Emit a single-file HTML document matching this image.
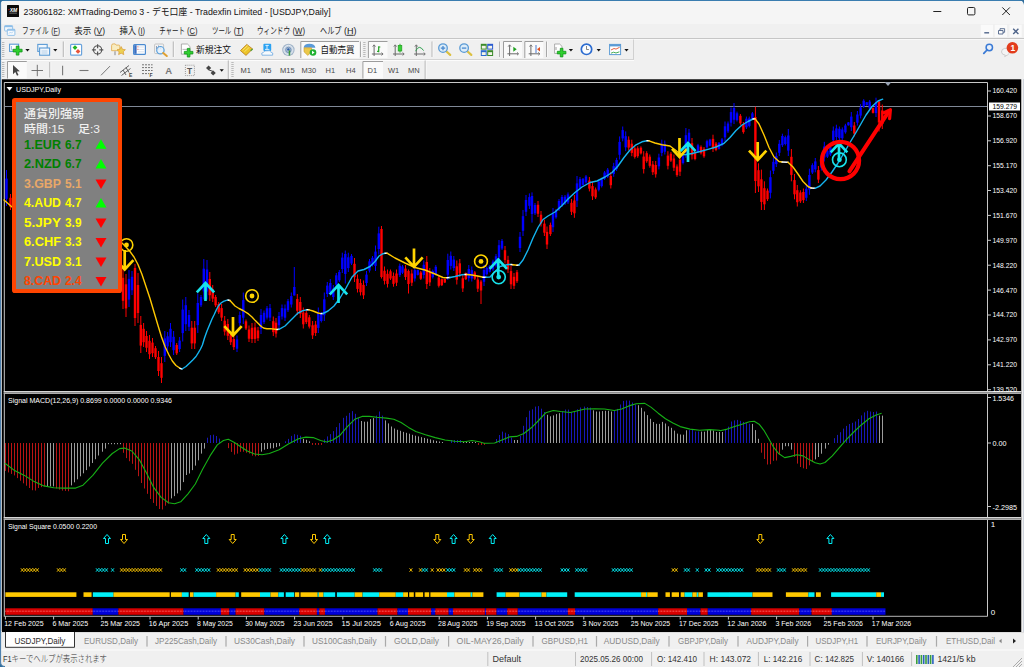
<!DOCTYPE html><html lang="ja"><head><meta charset="utf-8"><title>USDJPY,Daily</title><style>

html,body{margin:0;padding:0;}
body{width:1024px;height:667px;overflow:hidden;background:#f0f0f0;font-family:"Liberation Sans","Noto Sans CJK JP",sans-serif;position:relative;}
.t{position:absolute;white-space:nowrap;}
.a{position:absolute;}
svg{position:absolute;left:0;top:0;}
svg text{font-family:"Liberation Sans","Noto Sans CJK JP",sans-serif;}

</style></head><body>
<div class="a" style="left:0;top:0;width:1024px;height:24px;background:#f5f5f5"></div>
<div class="a" style="left:0;top:24px;width:1024px;height:14px;background:#f0f0f0"></div>
<div class="a" style="left:0;top:0;width:1024px;height:1px;background:#3a7db0"></div>
<div class="a" style="left:6.9px;top:5.1px;width:12px;height:12px;background:#0a0a0a;border-radius:0.6px"></div>
<div class="a" style="left:0;top:37.7px;width:1024px;height:1.2px;background:#c6c6c6"></div>
<div class="a" style="left:0;top:38.9px;width:1024px;height:1px;background:#f9f9f9"></div>
<div class="a" style="left:0;top:59px;width:634px;height:1px;background:#d4d4d4"></div>
<div class="a" style="left:0;top:60px;width:634px;height:1px;background:#fcfcfc"></div>
<svg width="1024" height="667" viewBox="0 0 1024 667">
<path d="M933.3,11.5 h8" stroke="#222" stroke-width="1" fill="none"/>
<rect x="967.5" y="7.5" width="7.4" height="7.4" rx="1.2" fill="none" stroke="#222" stroke-width="1"/>
<path d="M1002.3,7.4 l7.6,7.6 M1009.9,7.4 l-7.6,7.6" stroke="#222" stroke-width="1" fill="none"/>
<rect x="980.8" y="24.8" width="12.2" height="12.2" fill="#fafafa"/>
<rect x="994.8" y="24.8" width="12.2" height="12.2" fill="#fafafa"/>
<rect x="1009.5" y="24.8" width="12.2" height="12.2" fill="#fafafa"/>
<path d="M984.3,32.8 h4.8" stroke="#50658a" stroke-width="1.4" fill="none"/>
<path d="M998.5,30.5 h4.5 v3.5 h-4.5 z M1000,30.5 v-1.8 h4.6 v3.6 h-1.6" stroke="#50658a" stroke-width="0.9" fill="none"/>
<path d="M1013.2,28.8 l5.2,5.2 M1018.4,28.8 l-5.2,5.2" stroke="#50658a" stroke-width="1.4" fill="none"/>
<rect x="4.6" y="25.6" width="8" height="5.4" rx="0.8" fill="#f4f9fd" stroke="#8cbde8" stroke-width="0.9"/><rect x="4.6" y="25.6" width="8" height="1.6" fill="#8cbde8"/><rect x="7.3" y="29.2" width="7.6" height="6.2" rx="0.8" fill="#f8fbfe" stroke="#8cbde8" stroke-width="0.9"/><rect x="7.3" y="29.2" width="7.6" height="1.5" fill="#8cbde8"/><path d="M9,33.6 l1.4,-1.6 l1.2,1.2 l1.6,-1.8" stroke="#9cc4ea" stroke-width="0.7" fill="none"/>
<rect x="9.3" y="12.7" width="7.6" height="0.8" fill="#8a8a8a"/><circle cx="9" cy="9.7" r="0.6" fill="#e02020"/>
<circle cx="989.3" cy="47.5" r="3.2" fill="#e8f0fb" stroke="#3a7ad5" stroke-width="1.5"/><path d="M987,50 l-3.2,3.4" stroke="#3a7ad5" stroke-width="1.8" stroke-linecap="round"/>
<path d="M1001.5,52 a4,3.6 0 1 1 6,3 l-2.8,1.6 l0.6,-1.5 a4,3.6 0 0 1 -3.8,-3.1z" fill="#f4f4f4" stroke="#bdbdbd" stroke-width="0.7"/>
<circle cx="1012.4" cy="47.8" r="5.8" fill="#e23c1c"/>
<text x="1010.4" y="51" font-size="8.5" font-weight="bold" fill="#fff">1</text>
<path d="M2,42.5 h2.4 M2,44.5 h2.4 M2,46.5 h2.4 M2,48.5 h2.4 M2,50.5 h2.4 M2,52.5 h2.4 M2,54.5 h2.4 M2,56.5 h2.4 " stroke="#b4b4b4" stroke-width="0.9"/>
<path d="M2,62.5 h2.4 M2,64.5 h2.4 M2,66.5 h2.4 M2,68.5 h2.4 M2,70.5 h2.4 M2,72.5 h2.4 M2,74.5 h2.4 M2,76.5 h2.4 " stroke="#b4b4b4" stroke-width="0.9"/>
<path d="M363.2,42.5 h2.4 M363.2,44.5 h2.4 M363.2,46.5 h2.4 M363.2,48.5 h2.4 M363.2,50.5 h2.4 M363.2,52.5 h2.4 M363.2,54.5 h2.4 M363.2,56.5 h2.4 " stroke="#b4b4b4" stroke-width="0.9"/>
<path d="M231.3,62.5 h2.4 M231.3,64.5 h2.4 M231.3,66.5 h2.4 M231.3,68.5 h2.4 M231.3,70.5 h2.4 M231.3,72.5 h2.4 M231.3,74.5 h2.4 M231.3,76.5 h2.4 " stroke="#b4b4b4" stroke-width="0.9"/>
<rect x="62.8" y="41.5" width="1" height="15.5" fill="#a8a8a8"/><rect x="63.8" y="41.5" width="0.8" height="15.5" fill="#fbfbfb"/>
<rect x="172.8" y="41.5" width="1" height="15.5" fill="#a8a8a8"/><rect x="173.8" y="41.5" width="0.8" height="15.5" fill="#fbfbfb"/>
<rect x="360.0" y="41.5" width="1" height="15.5" fill="#a8a8a8"/><rect x="361.0" y="41.5" width="0.8" height="15.5" fill="#fbfbfb"/>
<rect x="431.6" y="41.5" width="1" height="15.5" fill="#a8a8a8"/><rect x="432.6" y="41.5" width="0.8" height="15.5" fill="#fbfbfb"/>
<rect x="499.2" y="41.5" width="1" height="15.5" fill="#a8a8a8"/><rect x="500.2" y="41.5" width="0.8" height="15.5" fill="#fbfbfb"/>
<rect x="546.0" y="41.5" width="1" height="15.5" fill="#a8a8a8"/><rect x="547.0" y="41.5" width="0.8" height="15.5" fill="#fbfbfb"/>
<rect x="49.4" y="62" width="1" height="15.5" fill="#a8a8a8"/><rect x="50.4" y="62" width="0.8" height="15.5" fill="#fbfbfb"/>
<rect x="227.8" y="60.5" width="1" height="18.5" fill="#a8a8a8"/><rect x="228.8" y="60.5" width="0.8" height="18.5" fill="#fbfbfb"/>
<rect x="424.7" y="60.5" width="1" height="18.5" fill="#a8a8a8"/><rect x="425.7" y="60.5" width="0.8" height="18.5" fill="#fbfbfb"/>
<path d="M633.5,59.5 V39.5" stroke="#d0d0d0" stroke-width="1" fill="none"/>
<path d="M25.4,49 h4.2 l-2.1,2.4 z" fill="#111"/>
<path d="M53.2,49 h4.2 l-2.1,2.4 z" fill="#111"/>
<path d="M568.8,49 h4.2 l-2.1,2.4 z" fill="#111"/>
<path d="M596.6,49 h4.2 l-2.1,2.4 z" fill="#111"/>
<path d="M624.4,49 h4.2 l-2.1,2.4 z" fill="#111"/>
<path d="M219.6,69.3 h4.2 l-2.1,2.4 z" fill="#111"/>
<rect x="7" y="61" width="19.8" height="17.5" fill="#fafafa"/><path d="M7.5,78.5 V61.5 H26.8" stroke="#9c9c9c" stroke-width="1" fill="none"/>
<rect x="362.4" y="61" width="20.600000000000023" height="17.5" fill="#fafafa"/><path d="M362.9,78.5 V61.5 H383" stroke="#9c9c9c" stroke-width="1" fill="none"/>
<rect x="300.3" y="41" width="58.69999999999999" height="17" fill="#fafafa"/><path d="M300.8,58 V41.5 H359" stroke="#9c9c9c" stroke-width="1" fill="none"/>
<rect x="367.9" y="41" width="19.600000000000023" height="17" fill="#fafafa"/><path d="M368.4,58 V41.5 H387.5" stroke="#9c9c9c" stroke-width="1" fill="none"/>
<rect x="503" y="41" width="19" height="17" fill="#fafafa"/><path d="M503.5,58 V41.5 H522" stroke="#9c9c9c" stroke-width="1" fill="none"/>
<rect x="524.3" y="41" width="19.0" height="17" fill="#fafafa"/><path d="M524.8,58 V41.5 H543.3" stroke="#9c9c9c" stroke-width="1" fill="none"/>
<rect x="9.6" y="44.2" width="9" height="7.2" fill="#fff" stroke="#5b9bd5" stroke-width="1.1"/><path d="M11.5,46 v3.8 h4" stroke="#7aa7d8" stroke-width="0.7" fill="none"/>
<path d="M16.25,46.1 h2.7 v3.15 h3.15 v2.7 h-3.15 v3.15 h-2.7 v-3.15 h-3.15 v-2.7 h3.15 z" fill="#2fd02f" stroke="#12961a" stroke-width="0.8"/>
<rect x="37.8" y="44.4" width="9.4" height="7" fill="#f2f7fc" stroke="#5b9bd5" stroke-width="1.1"/><rect x="39.6" y="48" width="10" height="7.2" fill="#f2f7fc" stroke="#5b9bd5" stroke-width="1.1"/><path d="M41.5,51 h6 M41.5,53 h6" stroke="#9abbe0" stroke-width="0.7"/>
<rect x="70.6" y="44.4" width="11" height="10.8" rx="1" fill="#fff" stroke="#6aa3dc" stroke-width="1.2"/>
<path d="M72.6,47.6 l2.4,-2.4 l2.4,2.4 l-2.4,2.4 z" fill="#22b422"/><path d="M75.6,51.4 l2.4,-2.4 l2.4,2.4 l-2.4,2.4 z" fill="#e8553a"/>
<circle cx="97.6" cy="49.9" r="4.1" fill="none" stroke="#555" stroke-width="1.1"/><path d="M97.6,44.2 v4 M97.6,51.6 v4 M91.9,49.9 h4 M99.3,49.9 h4" stroke="#555" stroke-width="1.2"/>
<path d="M111.6,45.5 q0,-1.6 1.6,-1.6 h2 l1,1.2 h2.6 q1,0 1,1 v4.6 h-8.2 z" fill="#f8ecc0" stroke="#e0a848" stroke-width="0.8"/>
<rect x="114.2" y="51.2" width="1.6" height="4" fill="#b0b0b0"/>
<path d="M121.2,46.6 l1.3,2.7 l2.9,0.4 l-2.1,2 l0.5,2.9 l-2.6,-1.4 l-2.6,1.4 l0.5,-2.9 l-2.1,-2 l2.9,-0.4 z" fill="#ecd052" stroke="#d89a38" stroke-width="0.7"/>
<rect x="133.6" y="44.6" width="11.8" height="9.8" rx="1" fill="#fff" stroke="#4a8ad0" stroke-width="1.2"/><rect x="134.2" y="45.2" width="2.4" height="8.6" fill="#3a6ec0"/><path d="M138,47 h6 M138,49.4 h6 M138,51.8 h6" stroke="#c8d4e4" stroke-width="0.7"/><rect x="137.4" y="46.4" width="0.9" height="0.9" fill="#e04030"/><rect x="137.4" y="48.8" width="0.9" height="0.9" fill="#e04030"/>
<rect x="154.6" y="44" width="9" height="9.6" rx="1" fill="#f4f4f4" stroke="#b8b8b8" stroke-width="0.8"/><path d="M156.5,46 v3 M158.5,45.5 v4 M160.5,46 v3" stroke="#7a8aa8" stroke-width="0.8"/>
<circle cx="160.4" cy="50.2" r="3.7" fill="#e4f0fa" fill-opacity="0.85" stroke="#5aa0dc" stroke-width="1.2"/><path d="M163.2,53 l3.6,3" stroke="#e0a030" stroke-width="2" stroke-linecap="round"/>
<path d="M181.4,44 h6 l2.6,2.6 v7.6 h-8.6 z" fill="#fff" stroke="#9a9a9a" stroke-width="0.8"/><path d="M182.5,49.4 h6.4" stroke="#aaa" stroke-width="0.8"/>
<path d="M187.29999999999998,48.400000000000006 h2.6 v3.0 h3.0 v2.6 h-3.0 v3.0 h-2.6 v-3.0 h-3.0 v-2.6 h3.0 z" fill="#2fd02f" stroke="#12961a" stroke-width="0.8"/>
<path d="M240.4,50.6 l6.4,-6.2 l5.8,4.6 l-6.6,6.4 z" fill="#ecc428" stroke="#b87a20" stroke-width="0.8"/><path d="M242.6,50.2 l5,-4.6 M244.4,51.8 l5,-4.6" stroke="#f8e47a" stroke-width="0.9"/><path d="M250.6,50.8 l2,-1.8" stroke="#5aa040" stroke-width="1.4"/>
<rect x="263.4" y="43.8" width="7.8" height="7.2" rx="1" fill="#2aa2f2"/><path d="M265.4,45.4 h3.4 M267,45.4 v4 M265,49.4 h4.4" stroke="#fff" stroke-width="0.8" fill="none"/>
<path d="M262,55.2 q-1.4,-2.4 1.6,-3 q1,-2 3.6,-1.4 q2.6,-0.8 3.6,1.2 q3,0.6 1.8,3.2 z" fill="#f6fafd" stroke="#6aa6e0" stroke-width="0.8"/>
<circle cx="288.4" cy="49.9" r="6.2" fill="#a4b6ca"/><circle cx="288.4" cy="49.9" r="4.6" fill="#c8d4e2" stroke="#e6edf4" stroke-width="0.9"/><circle cx="288.4" cy="49.9" r="2.7" fill="#aebfd4" stroke="#6f90b8" stroke-width="0.9"/><circle cx="288.4" cy="49.4" r="1.2" fill="#2f60a8"/><rect x="288.7" y="50.4" width="1.5" height="5.2" fill="#3a9a3a"/>
<path d="M303.6,47.8 q0.4,-4 5.8,-4 q5.4,0 6,4 z" fill="#5a9ad8"/><path d="M304,47.8 h7.6 v4 l-3.8,3.6 l-3.8,-3.6 z" fill="#ecc84a" stroke="#c89a30" stroke-width="0.6"/><circle cx="313" cy="52.5" r="3.3" fill="#20b030"/><path d="M312,50.8 l2.6,1.7 l-2.6,1.7 z" fill="#fff"/>
<path d="M374.1,45.2 V56 M371.90000000000003,54 H382.70000000000005" stroke="#6a6a6a" stroke-width="1" fill="none"/><path d="M372.70000000000005,46.6 L374.1,44.8 L375.5,46.6 M381.5,52.6 L383.1,54 L381.5,55.4" stroke="#6a6a6a" stroke-width="0.9" fill="none"/>
<path d="M378.7,46.3 V52.2 M378.7,47 h1.6 M378.7,51.4 h-1.6" stroke="#20a020" stroke-width="1.2" fill="none"/>
<path d="M395.2,45.2 V56 M393.0,54 H403.8" stroke="#6a6a6a" stroke-width="1" fill="none"/><path d="M393.8,46.6 L395.2,44.8 L396.59999999999997,46.6 M402.59999999999997,52.6 L404.2,54 L402.59999999999997,55.4" stroke="#6a6a6a" stroke-width="0.9" fill="none"/>
<path d="M400,43.8 V52.6" stroke="#20a020" stroke-width="0.9"/><rect x="398.2" y="45.4" width="3.6" height="5.6" fill="#38d038" stroke="#20a020" stroke-width="0.7"/>
<path d="M416.3,45.2 V56 M414.1,54 H424.90000000000003" stroke="#6a6a6a" stroke-width="1" fill="none"/><path d="M414.90000000000003,46.6 L416.3,44.8 L417.7,46.6 M423.7,52.6 L425.3,54 L423.7,55.4" stroke="#6a6a6a" stroke-width="0.9" fill="none"/>
<path d="M415.6,51.2 q3.4,-7.4 8,-0.6" stroke="#30a050" stroke-width="1" fill="none"/>
<path d="M446.2,51.300000000000004 l4,3.6" stroke="#dcc040" stroke-width="2.2" stroke-linecap="round"/><circle cx="443" cy="48.1" r="4.3" fill="#dcecf8" stroke="#5a9ad5" stroke-width="1.3"/>
<path d="M440.8,48.1 h4.4" stroke="#4a8ad0" stroke-width="1.3"/>
<path d="M443,45.9 v4.4" stroke="#4a8ad0" stroke-width="1.3"/>
<path d="M467.3,51.300000000000004 l4,3.6" stroke="#dcc040" stroke-width="2.2" stroke-linecap="round"/><circle cx="464.1" cy="48.1" r="4.3" fill="#dcecf8" stroke="#5a9ad5" stroke-width="1.3"/>
<path d="M461.90000000000003,48.1 h4.4" stroke="#4a8ad0" stroke-width="1.3"/>
<rect x="480.8" y="43.8" width="5.9" height="5.8" fill="#3a8a2a"/><rect x="481.8" y="45.8" width="3.9" height="2.8" fill="#f4f4e8"/>
<rect x="487.2" y="43.8" width="5.9" height="5.8" fill="#2a5ad0"/><rect x="488.2" y="45.8" width="3.9" height="2.8" fill="#f4f4e8"/>
<rect x="480.8" y="50.2" width="5.9" height="5.8" fill="#2a6ad0"/><rect x="481.8" y="52.2" width="3.9" height="2.8" fill="#f4f4e8"/>
<rect x="487.2" y="50.2" width="5.9" height="5.8" fill="#3a8a2a"/><rect x="488.2" y="52.2" width="3.9" height="2.8" fill="#f4f4e8"/>
<path d="M509.6,45.2 V56 M507.40000000000003,53.8 H518.2" stroke="#6a6a6a" stroke-width="1" fill="none"/><path d="M508.20000000000005,46.6 L509.6,44.8 L511.0,46.6 M517.0,52.4 L518.6,53.8 L517.0,55.199999999999996" stroke="#6a6a6a" stroke-width="0.9" fill="none"/>
<path d="M513.3,46.8 l3.4,2.5 l-3.4,2.5 z" fill="#20a020"/>
<path d="M530.9,45.2 V56 M528.6999999999999,53.8 H539.5" stroke="#6a6a6a" stroke-width="1" fill="none"/><path d="M529.5,46.6 L530.9,44.8 L532.3,46.6 M538.3,52.4 L539.9,53.8 L538.3,55.199999999999996" stroke="#6a6a6a" stroke-width="0.9" fill="none"/>
<path d="M536,45 V53" stroke="#4a7ad0" stroke-width="1"/><path d="M540,47 l-3,2.2 l3,2.2 z" fill="#e05020"/>
<path d="M554.6,44 h5 l2.4,2.4 v7 h-7.4 z" fill="#fff" stroke="#9a9a9a" stroke-width="0.8"/><path d="M556,47 v3" stroke="#888" stroke-width="0.8"/>
<path d="M560.3000000000001,48.300000000000004 h2.6 v3.0 h3.0 v2.6 h-3.0 v3.0 h-2.6 v-3.0 h-3.0 v-2.6 h3.0 z" fill="#2fd02f" stroke="#12961a" stroke-width="0.8"/>
<circle cx="586.5" cy="49.3" r="5.2" fill="#fbfdff" stroke="#2c6cd0" stroke-width="1.7"/><path d="M586.5,46 v3.5 h2.4" stroke="#666" stroke-width="0.8" fill="none"/>
<rect x="609.6" y="44.4" width="11" height="10.2" fill="#fff" stroke="#5b9bd5" stroke-width="1"/><rect x="609.6" y="44.4" width="11" height="2" fill="#5b9bd5"/><path d="M611,50 l3,-1.5 l2,0.6 l3.6,-1.8" stroke="#e05030" stroke-width="0.9" fill="none"/><path d="M611,53.2 l2.6,-1 l2.4,0.8 l3.4,-1.2" stroke="#30a040" stroke-width="0.9" fill="none"/>
<path d="M13,65 v9.2 l2.3,-2.1 l1.7,3.6 l1.5,-0.7 l-1.7,-3.5 l3,-0.2 z" fill="#444"/>
<path d="M37.3,64.8 v11.4 M31.5,70.5 h11.5" stroke="#666" stroke-width="0.9"/>
<path d="M62.6,65.7 v9.6" stroke="#777" stroke-width="1.1"/>
<path d="M79.5,70.5 h9" stroke="#777" stroke-width="1.1"/>
<path d="M101,75.3 L110,66.1" stroke="#777" stroke-width="1"/>
<path d="M120,72.5 l9,-7 M121.5,75.5 l9,-7 M123,70 l3,5 M126,67.5 l3,5" stroke="#555" stroke-width="0.9" fill="none"/>
<text x="129" y="77" font-size="5" font-weight="bold" fill="#444">E</text>
<path d="M142,64.8 h10.6 M142,67.6 h10.6 M142,70.5 h10.6 M142,73.6 h7" stroke="#666" stroke-width="0.9" stroke-dasharray="2 1"/>
<text x="149.6" y="77" font-size="5" font-weight="bold" fill="#444">F</text>
<text x="165.2" y="74" font-size="9.5" font-weight="bold" fill="#777">A</text>
<rect x="185.4" y="65.2" width="9" height="10.4" fill="none" stroke="#888" stroke-width="0.8" stroke-dasharray="1 1"/><text x="187" y="74" font-size="8.5" font-weight="bold" fill="#555">T</text>
<path d="M206,68 l2.6,-2.4 l2.6,2.4 l-2.6,2.4 z M210.6,73 l2.6,-2.4 l2.6,2.4 l-2.6,2.4 z" fill="#444"/><path d="M209,70 l4,1.4" stroke="#444" stroke-width="1"/>
<text x="9.7" y="12.4" font-size="5" fill="#fff" font-weight="bold" textLength="7.6" lengthAdjust="spacingAndGlyphs" font-style="italic">XM</text>
<text x="23.6" y="15.0" font-size="9.5" fill="#111" font-weight="normal" textLength="307" lengthAdjust="spacingAndGlyphs" >23806182: XMTrading-Demo 3 - デモ口座 - Tradexfin Limited - [USDJPY,Daily]</text>
<text x="22" y="33.9" font-size="9.2" fill="#1a1a1a" font-weight="normal" textLength="26.7" lengthAdjust="spacingAndGlyphs" >ファイル</text>
<text x="51.2" y="33.8" font-size="9" fill="#1a1a1a" font-weight="normal" textLength="8.8" lengthAdjust="spacingAndGlyphs" >(<tspan text-decoration="underline">F</tspan>)</text>
<text x="74.2" y="33.9" font-size="9.2" fill="#1a1a1a" font-weight="normal" textLength="17" lengthAdjust="spacingAndGlyphs" >表示</text>
<text x="93.7" y="33.8" font-size="9" fill="#1a1a1a" font-weight="normal" textLength="11.3" lengthAdjust="spacingAndGlyphs" >(<tspan text-decoration="underline">V</tspan>)</text>
<text x="119.5" y="33.9" font-size="9.2" fill="#1a1a1a" font-weight="normal" textLength="16.7" lengthAdjust="spacingAndGlyphs" >挿入</text>
<text x="138" y="33.8" font-size="9" fill="#1a1a1a" font-weight="normal" textLength="7" lengthAdjust="spacingAndGlyphs" >(<tspan text-decoration="underline">I</tspan>)</text>
<text x="159.2" y="33.9" font-size="9.2" fill="#1a1a1a" font-weight="normal" textLength="25.8" lengthAdjust="spacingAndGlyphs" >チャート</text>
<text x="187" y="33.8" font-size="9" fill="#1a1a1a" font-weight="normal" textLength="10.5" lengthAdjust="spacingAndGlyphs" >(<tspan text-decoration="underline">C</tspan>)</text>
<text x="212" y="33.9" font-size="9.2" fill="#1a1a1a" font-weight="normal" textLength="19.2" lengthAdjust="spacingAndGlyphs" >ツール</text>
<text x="233.7" y="33.8" font-size="9" fill="#1a1a1a" font-weight="normal" textLength="10" lengthAdjust="spacingAndGlyphs" >(<tspan text-decoration="underline">T</tspan>)</text>
<text x="257" y="33.9" font-size="9.2" fill="#1a1a1a" font-weight="normal" textLength="33" lengthAdjust="spacingAndGlyphs" >ウィンドウ</text>
<text x="292.5" y="33.8" font-size="9" fill="#1a1a1a" font-weight="normal" textLength="12.5" lengthAdjust="spacingAndGlyphs" >(<tspan text-decoration="underline">W</tspan>)</text>
<text x="320" y="33.9" font-size="9.2" fill="#1a1a1a" font-weight="normal" textLength="21.5" lengthAdjust="spacingAndGlyphs" >ヘルプ</text>
<text x="344" y="33.8" font-size="9" fill="#1a1a1a" font-weight="normal" textLength="12.5" lengthAdjust="spacingAndGlyphs" >(<tspan text-decoration="underline">H</tspan>)</text>
<text x="196" y="52.5" font-size="9" fill="#111" font-weight="normal" textLength="35" lengthAdjust="spacingAndGlyphs" >新規注文</text>
<text x="320.5" y="52.5" font-size="9" fill="#111" font-weight="normal" textLength="34" lengthAdjust="spacingAndGlyphs" >自動売買</text>
<text x="240.5" y="73.2" font-size="7.5" fill="#484848" font-weight="normal" >M1</text>
<text x="261" y="73.2" font-size="7.5" fill="#484848" font-weight="normal" >M5</text>
<text x="280" y="73.2" font-size="7.5" fill="#484848" font-weight="normal" >M15</text>
<text x="301.5" y="73.2" font-size="7.5" fill="#484848" font-weight="normal" >M30</text>
<text x="325.5" y="73.2" font-size="7.5" fill="#484848" font-weight="normal" >H1</text>
<text x="346" y="73.2" font-size="7.5" fill="#484848" font-weight="normal" >H4</text>
<text x="367.5" y="73.2" font-size="7.5" fill="#484848" font-weight="normal" >D1</text>
<text x="388" y="73.2" font-size="7.5" fill="#484848" font-weight="normal" >W1</text>
<text x="408" y="73.2" font-size="7.5" fill="#484848" font-weight="normal" >MN</text>
<rect x="2" y="79.3" width="1019.5" height="552.7" fill="#000"/>
<rect x="1" y="79" width="1" height="552" fill="#c4c4c4"/>
<rect x="1021.5" y="79" width="2.5" height="553" fill="#f0f0f0"/><rect x="1023" y="79" width="0.7" height="553" fill="#c0c8d4"/>
<path d="M4.3,616 V82.5 H987.5 V616" fill="none" stroke="#c8c8c8" stroke-width="1"/>
<rect x="3.8" y="391" width="1017.7" height="3" fill="#8c8c8c"/>
<rect x="3.8" y="391" width="1017.7" height="1" fill="#d6d6d6"/>
<rect x="3.8" y="393.2" width="1017.7" height="0.8" fill="#b4b4b4"/>
<rect x="3.8" y="517" width="1017.7" height="3" fill="#8c8c8c"/>
<rect x="3.8" y="517" width="1017.7" height="1" fill="#d6d6d6"/>
<rect x="3.8" y="519.2" width="1017.7" height="0.8" fill="#b4b4b4"/>
<rect x="3.8" y="615.8" width="984" height="1" fill="#b4b4b4"/>
<rect x="5" y="106" width="982" height="1" fill="#7f8896"/>
<rect x="6.0" y="170.0" width="1" height="36.0" fill="#0000ff"/>
<rect x="5.3" y="178.6" width="2.4" height="20.2" fill="#0000ff"/>
<rect x="10.0" y="194.0" width="1" height="16.0" fill="#ff0000"/>
<rect x="9.3" y="197.8" width="2.4" height="9.0" fill="#ff0000"/>
<rect x="122.5" y="268.0" width="1" height="41.0" fill="#ff0000"/>
<rect x="121.8" y="277.8" width="2.4" height="23.0" fill="#ff0000"/>
<rect x="125.5" y="274.0" width="1" height="43.0" fill="#ff0000"/>
<rect x="124.8" y="284.3" width="2.4" height="24.1" fill="#ff0000"/>
<rect x="128.5" y="270.0" width="1" height="37.0" fill="#0000ff"/>
<rect x="127.8" y="278.9" width="2.4" height="20.7" fill="#0000ff"/>
<rect x="131.5" y="271.0" width="1" height="24.0" fill="#0000ff"/>
<rect x="130.8" y="276.8" width="2.4" height="13.4" fill="#0000ff"/>
<rect x="134.5" y="264.0" width="1" height="62.0" fill="#ff0000"/>
<rect x="133.8" y="268.0" width="2.4" height="50.0" fill="#ff0000"/>
<rect x="137.5" y="273.0" width="1" height="50.0" fill="#ff0000"/>
<rect x="136.8" y="285.0" width="2.4" height="28.0" fill="#ff0000"/>
<rect x="140.3" y="316.0" width="1" height="37.0" fill="#ff0000"/>
<rect x="139.6" y="324.9" width="2.4" height="20.7" fill="#ff0000"/>
<rect x="143.1" y="323.0" width="1" height="24.0" fill="#ff0000"/>
<rect x="142.4" y="328.8" width="2.4" height="13.4" fill="#ff0000"/>
<rect x="146.0" y="331.0" width="1" height="21.0" fill="#ff0000"/>
<rect x="145.3" y="336.0" width="2.4" height="11.8" fill="#ff0000"/>
<rect x="149.0" y="335.0" width="1" height="24.0" fill="#ff0000"/>
<rect x="148.3" y="340.8" width="2.4" height="13.4" fill="#ff0000"/>
<rect x="152.0" y="338.0" width="1" height="19.0" fill="#ff0000"/>
<rect x="151.3" y="342.6" width="2.4" height="10.6" fill="#ff0000"/>
<rect x="155.0" y="346.0" width="1" height="13.0" fill="#ff0000"/>
<rect x="154.3" y="348.2" width="2.4" height="9.0" fill="#ff0000"/>
<rect x="158.0" y="351.0" width="1" height="25.0" fill="#ff0000"/>
<rect x="157.3" y="357.0" width="2.4" height="14.0" fill="#ff0000"/>
<rect x="161.0" y="357.0" width="1" height="26.0" fill="#ff0000"/>
<rect x="160.3" y="363.2" width="2.4" height="14.6" fill="#ff0000"/>
<rect x="164.3" y="331.0" width="1" height="31.0" fill="#0000ff"/>
<rect x="163.6" y="338.4" width="2.4" height="17.4" fill="#0000ff"/>
<rect x="167.1" y="332.0" width="1" height="18.0" fill="#0000ff"/>
<rect x="166.4" y="336.3" width="2.4" height="10.1" fill="#0000ff"/>
<rect x="170.0" y="323.0" width="1" height="24.0" fill="#0000ff"/>
<rect x="169.3" y="328.8" width="2.4" height="13.4" fill="#0000ff"/>
<rect x="173.1" y="331.0" width="1" height="24.0" fill="#0000ff"/>
<rect x="172.4" y="336.8" width="2.4" height="13.4" fill="#0000ff"/>
<rect x="176.2" y="343.0" width="1" height="12.0" fill="#ff0000"/>
<rect x="175.5" y="345.0" width="2.4" height="8.3" fill="#ff0000"/>
<rect x="179.1" y="337.0" width="1" height="15.0" fill="#0000ff"/>
<rect x="178.4" y="340.6" width="2.4" height="8.4" fill="#0000ff"/>
<rect x="182.2" y="299.5" width="1" height="42.0" fill="#0000ff"/>
<rect x="181.5" y="309.6" width="2.4" height="23.5" fill="#0000ff"/>
<rect x="185.3" y="297.0" width="1" height="34.0" fill="#0000ff"/>
<rect x="184.6" y="305.2" width="2.4" height="19.0" fill="#0000ff"/>
<rect x="188.5" y="310.0" width="1" height="21.0" fill="#0000ff"/>
<rect x="187.8" y="315.0" width="2.4" height="11.8" fill="#0000ff"/>
<rect x="191.3" y="321.0" width="1" height="28.0" fill="#ff0000"/>
<rect x="190.6" y="327.7" width="2.4" height="15.7" fill="#ff0000"/>
<rect x="194.2" y="321.0" width="1" height="28.0" fill="#ff0000"/>
<rect x="193.5" y="327.7" width="2.4" height="15.7" fill="#ff0000"/>
<rect x="197.3" y="293.5" width="1" height="39.5" fill="#0000ff"/>
<rect x="196.6" y="303.0" width="2.4" height="22.1" fill="#0000ff"/>
<rect x="200.5" y="295.0" width="1" height="12.0" fill="#0000ff"/>
<rect x="199.8" y="297.0" width="2.4" height="8.3" fill="#0000ff"/>
<rect x="203.3" y="259.0" width="1" height="40.5" fill="#0000ff"/>
<rect x="202.6" y="268.7" width="2.4" height="22.7" fill="#0000ff"/>
<rect x="206.5" y="260.0" width="1" height="39.5" fill="#0000ff"/>
<rect x="205.8" y="269.5" width="2.4" height="22.1" fill="#0000ff"/>
<rect x="209.3" y="272.0" width="1" height="29.0" fill="#ff0000"/>
<rect x="208.6" y="279.0" width="2.4" height="16.2" fill="#ff0000"/>
<rect x="212.2" y="285.0" width="1" height="17.0" fill="#ff0000"/>
<rect x="211.5" y="289.1" width="2.4" height="9.5" fill="#ff0000"/>
<rect x="215.1" y="295.0" width="1" height="12.0" fill="#ff0000"/>
<rect x="214.4" y="297.0" width="2.4" height="8.3" fill="#ff0000"/>
<rect x="218.2" y="302.0" width="1" height="12.0" fill="#ff0000"/>
<rect x="217.5" y="304.0" width="2.4" height="8.3" fill="#ff0000"/>
<rect x="221.1" y="304.0" width="1" height="17.0" fill="#ff0000"/>
<rect x="220.4" y="308.1" width="2.4" height="9.5" fill="#ff0000"/>
<rect x="224.2" y="316.0" width="1" height="19.5" fill="#ff0000"/>
<rect x="223.5" y="320.7" width="2.4" height="10.9" fill="#ff0000"/>
<rect x="227.3" y="319.0" width="1" height="21.0" fill="#ff0000"/>
<rect x="226.6" y="324.0" width="2.4" height="11.8" fill="#ff0000"/>
<rect x="230.2" y="331.0" width="1" height="14.0" fill="#ff0000"/>
<rect x="229.5" y="334.4" width="2.4" height="7.8" fill="#ff0000"/>
<rect x="233.3" y="335.5" width="1" height="14.5" fill="#ff0000"/>
<rect x="232.6" y="339.0" width="2.4" height="8.1" fill="#ff0000"/>
<rect x="236.5" y="335.5" width="1" height="16.5" fill="#0000ff"/>
<rect x="235.8" y="339.5" width="2.4" height="9.2" fill="#0000ff"/>
<rect x="239.3" y="311.5" width="1" height="14.5" fill="#0000ff"/>
<rect x="238.6" y="315.0" width="2.4" height="8.1" fill="#0000ff"/>
<rect x="242.8" y="292.5" width="1" height="31.5" fill="#0000ff"/>
<rect x="242.1" y="300.1" width="2.4" height="17.6" fill="#0000ff"/>
<rect x="245.5" y="319.5" width="1" height="10.5" fill="#ff0000"/>
<rect x="244.8" y="321.3" width="2.4" height="7.2" fill="#ff0000"/>
<rect x="248.5" y="325.5" width="1" height="16.5" fill="#ff0000"/>
<rect x="247.8" y="329.5" width="2.4" height="9.2" fill="#ff0000"/>
<rect x="251.5" y="323.0" width="1" height="20.0" fill="#ff0000"/>
<rect x="250.8" y="327.8" width="2.4" height="11.2" fill="#ff0000"/>
<rect x="254.5" y="322.5" width="1" height="20.5" fill="#ff0000"/>
<rect x="253.8" y="327.4" width="2.4" height="11.5" fill="#ff0000"/>
<rect x="257.5" y="327.0" width="1" height="14.0" fill="#ff0000"/>
<rect x="256.8" y="330.4" width="2.4" height="7.8" fill="#ff0000"/>
<rect x="260.5" y="309.0" width="1" height="25.0" fill="#0000ff"/>
<rect x="259.8" y="315.0" width="2.4" height="14.0" fill="#0000ff"/>
<rect x="263.5" y="310.5" width="1" height="13.5" fill="#0000ff"/>
<rect x="262.8" y="312.8" width="2.4" height="9.3" fill="#0000ff"/>
<rect x="266.5" y="306.0" width="1" height="13.5" fill="#0000ff"/>
<rect x="265.8" y="308.3" width="2.4" height="9.3" fill="#0000ff"/>
<rect x="269.5" y="304.0" width="1" height="17.0" fill="#0000ff"/>
<rect x="268.8" y="308.1" width="2.4" height="9.5" fill="#0000ff"/>
<rect x="272.8" y="316.5" width="1" height="19.5" fill="#ff0000"/>
<rect x="272.1" y="321.2" width="2.4" height="10.9" fill="#ff0000"/>
<rect x="275.5" y="318.0" width="1" height="19.5" fill="#ff0000"/>
<rect x="274.8" y="322.7" width="2.4" height="10.9" fill="#ff0000"/>
<rect x="278.5" y="312.0" width="1" height="16.5" fill="#0000ff"/>
<rect x="277.8" y="316.0" width="2.4" height="9.2" fill="#0000ff"/>
<rect x="281.5" y="304.5" width="1" height="15.0" fill="#0000ff"/>
<rect x="280.8" y="308.1" width="2.4" height="8.4" fill="#0000ff"/>
<rect x="284.5" y="304.5" width="1" height="16.5" fill="#0000ff"/>
<rect x="283.8" y="308.5" width="2.4" height="9.2" fill="#0000ff"/>
<rect x="287.5" y="299.0" width="1" height="13.0" fill="#0000ff"/>
<rect x="286.8" y="301.2" width="2.4" height="9.0" fill="#0000ff"/>
<rect x="290.8" y="292.5" width="1" height="15.0" fill="#0000ff"/>
<rect x="290.1" y="296.1" width="2.4" height="8.4" fill="#0000ff"/>
<rect x="293.8" y="267.0" width="1" height="28.5" fill="#0000ff"/>
<rect x="293.1" y="287.0" width="2.4" height="8.5" fill="#0000ff"/>
<rect x="296.8" y="294.0" width="1" height="21.0" fill="#ff0000"/>
<rect x="296.1" y="299.0" width="2.4" height="11.8" fill="#ff0000"/>
<rect x="299.8" y="297.0" width="1" height="21.0" fill="#ff0000"/>
<rect x="299.1" y="302.0" width="2.4" height="11.8" fill="#ff0000"/>
<rect x="302.8" y="307.5" width="1" height="21.0" fill="#ff0000"/>
<rect x="302.1" y="312.5" width="2.4" height="11.8" fill="#ff0000"/>
<rect x="305.8" y="310.5" width="1" height="13.5" fill="#ff0000"/>
<rect x="305.1" y="312.8" width="2.4" height="9.3" fill="#ff0000"/>
<rect x="308.8" y="315.0" width="1" height="13.5" fill="#ff0000"/>
<rect x="308.1" y="317.3" width="2.4" height="9.3" fill="#ff0000"/>
<rect x="312.1" y="321.0" width="1" height="18.0" fill="#ff0000"/>
<rect x="311.4" y="325.3" width="2.4" height="10.1" fill="#ff0000"/>
<rect x="315.1" y="321.0" width="1" height="15.0" fill="#ff0000"/>
<rect x="314.4" y="324.6" width="2.4" height="8.4" fill="#ff0000"/>
<rect x="317.8" y="307.5" width="1" height="25.5" fill="#0000ff"/>
<rect x="317.1" y="313.6" width="2.4" height="14.3" fill="#0000ff"/>
<rect x="320.8" y="312.0" width="1" height="10.5" fill="#0000ff"/>
<rect x="320.1" y="313.8" width="2.4" height="7.2" fill="#0000ff"/>
<rect x="323.8" y="292.5" width="1" height="28.5" fill="#0000ff"/>
<rect x="323.1" y="299.3" width="2.4" height="16.0" fill="#0000ff"/>
<rect x="326.8" y="282.0" width="1" height="15.0" fill="#0000ff"/>
<rect x="326.1" y="285.6" width="2.4" height="8.4" fill="#0000ff"/>
<rect x="329.8" y="279.0" width="1" height="16.5" fill="#0000ff"/>
<rect x="329.1" y="283.0" width="2.4" height="9.2" fill="#0000ff"/>
<rect x="332.8" y="285.0" width="1" height="15.0" fill="#0000ff"/>
<rect x="332.1" y="288.6" width="2.4" height="8.4" fill="#0000ff"/>
<rect x="335.8" y="273.0" width="1" height="13.5" fill="#0000ff"/>
<rect x="335.1" y="275.3" width="2.4" height="9.3" fill="#0000ff"/>
<rect x="338.8" y="270.0" width="1" height="12.0" fill="#0000ff"/>
<rect x="338.1" y="272.0" width="2.4" height="8.3" fill="#0000ff"/>
<rect x="341.8" y="252.7" width="1" height="20.3" fill="#0000ff"/>
<rect x="341.1" y="257.6" width="2.4" height="11.4" fill="#0000ff"/>
<rect x="344.8" y="250.5" width="1" height="33.0" fill="#0000ff"/>
<rect x="344.1" y="254.0" width="2.4" height="20.0" fill="#0000ff"/>
<rect x="347.8" y="252.7" width="1" height="19.3" fill="#0000ff"/>
<rect x="347.1" y="257.3" width="2.4" height="10.8" fill="#0000ff"/>
<rect x="351.0" y="254.0" width="1" height="11.0" fill="#0000ff"/>
<rect x="350.3" y="255.9" width="2.4" height="7.6" fill="#0000ff"/>
<rect x="354.0" y="258.0" width="1" height="24.0" fill="#ff0000"/>
<rect x="353.3" y="263.8" width="2.4" height="13.4" fill="#ff0000"/>
<rect x="357.0" y="274.5" width="1" height="18.0" fill="#ff0000"/>
<rect x="356.3" y="278.8" width="2.4" height="10.1" fill="#ff0000"/>
<rect x="360.0" y="279.0" width="1" height="16.5" fill="#ff0000"/>
<rect x="359.3" y="283.0" width="2.4" height="9.2" fill="#ff0000"/>
<rect x="363.0" y="280.5" width="1" height="18.5" fill="#ff0000"/>
<rect x="362.3" y="284.9" width="2.4" height="10.4" fill="#ff0000"/>
<rect x="366.0" y="271.0" width="1" height="15.0" fill="#0000ff"/>
<rect x="365.3" y="274.6" width="2.4" height="8.4" fill="#0000ff"/>
<rect x="369.0" y="259.0" width="1" height="13.5" fill="#0000ff"/>
<rect x="368.3" y="261.3" width="2.4" height="9.3" fill="#0000ff"/>
<rect x="372.0" y="256.0" width="1" height="10.5" fill="#0000ff"/>
<rect x="371.3" y="257.8" width="2.4" height="7.2" fill="#0000ff"/>
<rect x="375.0" y="245.5" width="1" height="25.5" fill="#0000ff"/>
<rect x="374.3" y="251.6" width="2.4" height="14.3" fill="#0000ff"/>
<rect x="378.3" y="226.7" width="1" height="27.8" fill="#0000ff"/>
<rect x="377.6" y="233.4" width="2.4" height="15.6" fill="#0000ff"/>
<rect x="381.0" y="226.0" width="1" height="52.5" fill="#ff0000"/>
<rect x="380.3" y="229.0" width="2.4" height="48.0" fill="#ff0000"/>
<rect x="384.0" y="266.5" width="1" height="18.0" fill="#ff0000"/>
<rect x="383.3" y="270.8" width="2.4" height="10.1" fill="#ff0000"/>
<rect x="387.0" y="269.5" width="1" height="18.0" fill="#ff0000"/>
<rect x="386.3" y="273.8" width="2.4" height="10.1" fill="#ff0000"/>
<rect x="390.0" y="269.5" width="1" height="10.5" fill="#ff0000"/>
<rect x="389.3" y="271.3" width="2.4" height="7.2" fill="#ff0000"/>
<rect x="393.0" y="272.5" width="1" height="14.2" fill="#ff0000"/>
<rect x="392.3" y="275.9" width="2.4" height="8.0" fill="#ff0000"/>
<rect x="396.0" y="269.5" width="1" height="16.5" fill="#ff0000"/>
<rect x="395.3" y="273.5" width="2.4" height="9.2" fill="#ff0000"/>
<rect x="399.3" y="263.5" width="1" height="13.5" fill="#0000ff"/>
<rect x="398.6" y="265.8" width="2.4" height="9.3" fill="#0000ff"/>
<rect x="402.0" y="265.0" width="1" height="9.0" fill="#0000ff"/>
<rect x="401.3" y="266.5" width="2.4" height="6.2" fill="#0000ff"/>
<rect x="405.0" y="265.0" width="1" height="15.0" fill="#ff0000"/>
<rect x="404.3" y="268.6" width="2.4" height="8.4" fill="#ff0000"/>
<rect x="408.0" y="269.5" width="1" height="24.0" fill="#ff0000"/>
<rect x="407.3" y="271.0" width="2.4" height="13.0" fill="#ff0000"/>
<rect x="411.3" y="269.5" width="1" height="16.5" fill="#ff0000"/>
<rect x="410.6" y="273.5" width="2.4" height="9.2" fill="#ff0000"/>
<rect x="414.3" y="266.5" width="1" height="15.0" fill="#0000ff"/>
<rect x="413.6" y="270.1" width="2.4" height="8.4" fill="#0000ff"/>
<rect x="417.3" y="269.5" width="1" height="6.0" fill="#0000ff"/>
<rect x="416.6" y="270.1" width="2.4" height="4.8" fill="#0000ff"/>
<rect x="420.3" y="271.0" width="1" height="9.0" fill="#ff0000"/>
<rect x="419.6" y="272.5" width="2.4" height="6.2" fill="#ff0000"/>
<rect x="423.3" y="260.5" width="1" height="18.0" fill="#0000ff"/>
<rect x="422.6" y="264.8" width="2.4" height="10.1" fill="#0000ff"/>
<rect x="426.3" y="256.0" width="1" height="33.0" fill="#ff0000"/>
<rect x="425.6" y="262.0" width="2.4" height="22.0" fill="#ff0000"/>
<rect x="429.3" y="268.0" width="1" height="18.0" fill="#ff0000"/>
<rect x="428.6" y="272.3" width="2.4" height="10.1" fill="#ff0000"/>
<rect x="432.3" y="269.5" width="1" height="9.0" fill="#0000ff"/>
<rect x="431.6" y="271.0" width="2.4" height="6.2" fill="#0000ff"/>
<rect x="435.3" y="265.0" width="1" height="10.5" fill="#0000ff"/>
<rect x="434.6" y="266.8" width="2.4" height="7.2" fill="#0000ff"/>
<rect x="438.3" y="275.5" width="1" height="12.0" fill="#ff0000"/>
<rect x="437.6" y="277.5" width="2.4" height="8.3" fill="#ff0000"/>
<rect x="441.3" y="278.5" width="1" height="7.5" fill="#ff0000"/>
<rect x="440.6" y="279.2" width="2.4" height="6.0" fill="#ff0000"/>
<rect x="444.3" y="278.5" width="1" height="4.5" fill="#ff0000"/>
<rect x="443.6" y="278.9" width="2.4" height="3.6" fill="#ff0000"/>
<rect x="447.3" y="253.7" width="1" height="26.3" fill="#0000ff"/>
<rect x="446.6" y="260.0" width="2.4" height="14.7" fill="#0000ff"/>
<rect x="450.3" y="251.5" width="1" height="18.0" fill="#0000ff"/>
<rect x="449.6" y="255.8" width="2.4" height="10.1" fill="#0000ff"/>
<rect x="453.3" y="256.0" width="1" height="15.0" fill="#0000ff"/>
<rect x="452.6" y="259.6" width="2.4" height="8.4" fill="#0000ff"/>
<rect x="456.3" y="260.5" width="1" height="24.0" fill="#ff0000"/>
<rect x="455.6" y="266.3" width="2.4" height="13.4" fill="#ff0000"/>
<rect x="459.3" y="259.0" width="1" height="18.0" fill="#ff0000"/>
<rect x="458.6" y="263.3" width="2.4" height="10.1" fill="#ff0000"/>
<rect x="462.3" y="274.0" width="1" height="18.0" fill="#ff0000"/>
<rect x="461.6" y="278.3" width="2.4" height="10.1" fill="#ff0000"/>
<rect x="465.3" y="272.5" width="1" height="7.5" fill="#ff0000"/>
<rect x="464.6" y="273.2" width="2.4" height="6.0" fill="#ff0000"/>
<rect x="468.3" y="265.0" width="1" height="16.5" fill="#0000ff"/>
<rect x="467.6" y="269.0" width="2.4" height="9.2" fill="#0000ff"/>
<rect x="471.3" y="266.5" width="1" height="15.0" fill="#0000ff"/>
<rect x="470.6" y="270.1" width="2.4" height="8.4" fill="#0000ff"/>
<rect x="474.3" y="271.0" width="1" height="9.0" fill="#ff0000"/>
<rect x="473.6" y="272.5" width="2.4" height="6.2" fill="#ff0000"/>
<rect x="477.3" y="275.5" width="1" height="16.5" fill="#ff0000"/>
<rect x="476.6" y="279.5" width="2.4" height="9.2" fill="#ff0000"/>
<rect x="480.5" y="280.0" width="1" height="24.0" fill="#ff0000"/>
<rect x="479.8" y="281.5" width="2.4" height="9.0" fill="#ff0000"/>
<rect x="483.5" y="265.0" width="1" height="21.0" fill="#0000ff"/>
<rect x="482.8" y="270.0" width="2.4" height="11.8" fill="#0000ff"/>
<rect x="486.3" y="266.5" width="1" height="9.0" fill="#0000ff"/>
<rect x="485.6" y="268.0" width="2.4" height="6.2" fill="#0000ff"/>
<rect x="489.3" y="265.0" width="1" height="7.5" fill="#0000ff"/>
<rect x="488.6" y="265.8" width="2.4" height="6.0" fill="#0000ff"/>
<rect x="492.5" y="259.7" width="1" height="11.3" fill="#0000ff"/>
<rect x="491.8" y="261.6" width="2.4" height="7.8" fill="#0000ff"/>
<rect x="495.5" y="254.0" width="1" height="13.5" fill="#0000ff"/>
<rect x="494.8" y="256.3" width="2.4" height="9.3" fill="#0000ff"/>
<rect x="498.5" y="240.0" width="1" height="21.6" fill="#0000ff"/>
<rect x="497.8" y="245.2" width="2.4" height="12.1" fill="#0000ff"/>
<rect x="501.5" y="239.0" width="1" height="11.0" fill="#0000ff"/>
<rect x="500.8" y="240.9" width="2.4" height="7.6" fill="#0000ff"/>
<rect x="504.5" y="246.0" width="1" height="17.5" fill="#ff0000"/>
<rect x="503.8" y="250.2" width="2.4" height="9.8" fill="#ff0000"/>
<rect x="507.5" y="255.8" width="1" height="17.2" fill="#ff0000"/>
<rect x="506.8" y="259.9" width="2.4" height="9.6" fill="#ff0000"/>
<rect x="510.5" y="265.5" width="1" height="23.5" fill="#ff0000"/>
<rect x="509.8" y="271.1" width="2.4" height="13.2" fill="#ff0000"/>
<rect x="513.5" y="273.0" width="1" height="16.0" fill="#ff0000"/>
<rect x="512.8" y="276.8" width="2.4" height="9.0" fill="#ff0000"/>
<rect x="516.5" y="270.0" width="1" height="13.0" fill="#ff0000"/>
<rect x="515.8" y="272.2" width="2.4" height="9.0" fill="#ff0000"/>
<rect x="519.5" y="232.0" width="1" height="20.0" fill="#0000ff"/>
<rect x="518.8" y="236.8" width="2.4" height="11.2" fill="#0000ff"/>
<rect x="522.5" y="210.0" width="1" height="26.0" fill="#0000ff"/>
<rect x="521.8" y="216.2" width="2.4" height="14.6" fill="#0000ff"/>
<rect x="525.5" y="195.0" width="1" height="21.0" fill="#0000ff"/>
<rect x="524.8" y="200.0" width="2.4" height="11.8" fill="#0000ff"/>
<rect x="528.9" y="193.4" width="1" height="15.6" fill="#0000ff"/>
<rect x="528.2" y="197.1" width="2.4" height="8.7" fill="#0000ff"/>
<rect x="531.5" y="192.4" width="1" height="30.2" fill="#0000ff"/>
<rect x="530.8" y="196.0" width="2.4" height="18.0" fill="#0000ff"/>
<rect x="534.5" y="203.0" width="1" height="12.0" fill="#0000ff"/>
<rect x="533.8" y="205.0" width="2.4" height="8.3" fill="#0000ff"/>
<rect x="537.5" y="201.0" width="1" height="16.0" fill="#ff0000"/>
<rect x="536.8" y="204.8" width="2.4" height="9.0" fill="#ff0000"/>
<rect x="540.5" y="211.0" width="1" height="15.5" fill="#ff0000"/>
<rect x="539.8" y="214.7" width="2.4" height="8.7" fill="#ff0000"/>
<rect x="543.9" y="219.7" width="1" height="16.3" fill="#ff0000"/>
<rect x="543.2" y="223.6" width="2.4" height="9.1" fill="#ff0000"/>
<rect x="546.5" y="226.5" width="1" height="22.5" fill="#ff0000"/>
<rect x="545.8" y="231.9" width="2.4" height="12.6" fill="#ff0000"/>
<rect x="549.9" y="222.6" width="1" height="13.4" fill="#ff0000"/>
<rect x="549.2" y="224.9" width="2.4" height="9.2" fill="#ff0000"/>
<rect x="552.5" y="208.0" width="1" height="24.0" fill="#0000ff"/>
<rect x="551.8" y="213.8" width="2.4" height="13.4" fill="#0000ff"/>
<rect x="555.5" y="209.0" width="1" height="9.7" fill="#0000ff"/>
<rect x="554.8" y="210.6" width="2.4" height="6.7" fill="#0000ff"/>
<rect x="558.5" y="199.0" width="1" height="12.0" fill="#0000ff"/>
<rect x="557.8" y="201.0" width="2.4" height="8.3" fill="#0000ff"/>
<rect x="561.5" y="195.0" width="1" height="12.0" fill="#0000ff"/>
<rect x="560.8" y="197.0" width="2.4" height="8.3" fill="#0000ff"/>
<rect x="564.5" y="195.0" width="1" height="10.0" fill="#0000ff"/>
<rect x="563.8" y="196.7" width="2.4" height="6.9" fill="#0000ff"/>
<rect x="567.5" y="192.4" width="1" height="11.6" fill="#0000ff"/>
<rect x="566.8" y="194.4" width="2.4" height="8.0" fill="#0000ff"/>
<rect x="571.0" y="199.0" width="1" height="16.0" fill="#ff0000"/>
<rect x="570.3" y="202.8" width="2.4" height="9.0" fill="#ff0000"/>
<rect x="573.9" y="195.0" width="1" height="22.8" fill="#ff0000"/>
<rect x="573.2" y="200.5" width="2.4" height="12.8" fill="#ff0000"/>
<rect x="576.5" y="176.0" width="1" height="31.0" fill="#0000ff"/>
<rect x="575.8" y="183.4" width="2.4" height="17.4" fill="#0000ff"/>
<rect x="579.5" y="177.0" width="1" height="12.5" fill="#0000ff"/>
<rect x="578.8" y="179.1" width="2.4" height="8.6" fill="#0000ff"/>
<rect x="582.5" y="178.0" width="1" height="7.6" fill="#0000ff"/>
<rect x="581.8" y="178.8" width="2.4" height="6.1" fill="#0000ff"/>
<rect x="585.5" y="175.0" width="1" height="8.6" fill="#0000ff"/>
<rect x="584.8" y="176.5" width="2.4" height="5.9" fill="#0000ff"/>
<rect x="588.9" y="177.0" width="1" height="14.4" fill="#ff0000"/>
<rect x="588.2" y="180.5" width="2.4" height="8.1" fill="#ff0000"/>
<rect x="592.0" y="181.7" width="1" height="18.3" fill="#ff0000"/>
<rect x="591.3" y="186.1" width="2.4" height="10.2" fill="#ff0000"/>
<rect x="595.1" y="187.5" width="1" height="11.5" fill="#ff0000"/>
<rect x="594.4" y="189.5" width="2.4" height="7.9" fill="#ff0000"/>
<rect x="598.3" y="179.7" width="1" height="11.7" fill="#0000ff"/>
<rect x="597.6" y="181.7" width="2.4" height="8.1" fill="#0000ff"/>
<rect x="601.2" y="177.8" width="1" height="9.7" fill="#0000ff"/>
<rect x="600.5" y="179.4" width="2.4" height="6.7" fill="#0000ff"/>
<rect x="604.1" y="171.0" width="1" height="9.0" fill="#0000ff"/>
<rect x="603.4" y="172.5" width="2.4" height="6.2" fill="#0000ff"/>
<rect x="607.2" y="168.0" width="1" height="10.0" fill="#0000ff"/>
<rect x="606.5" y="169.7" width="2.4" height="6.9" fill="#0000ff"/>
<rect x="610.3" y="172.0" width="1" height="16.5" fill="#ff0000"/>
<rect x="609.6" y="176.0" width="2.4" height="9.2" fill="#ff0000"/>
<rect x="613.2" y="162.8" width="1" height="14.0" fill="#0000ff"/>
<rect x="612.5" y="166.2" width="2.4" height="7.8" fill="#0000ff"/>
<rect x="616.1" y="157.8" width="1" height="13.2" fill="#0000ff"/>
<rect x="615.4" y="160.0" width="2.4" height="9.1" fill="#0000ff"/>
<rect x="619.1" y="136.4" width="1" height="23.1" fill="#0000ff"/>
<rect x="618.4" y="141.9" width="2.4" height="12.9" fill="#0000ff"/>
<rect x="622.2" y="126.5" width="1" height="14.8" fill="#0000ff"/>
<rect x="621.5" y="130.1" width="2.4" height="8.3" fill="#0000ff"/>
<rect x="625.2" y="131.4" width="1" height="19.8" fill="#0000ff"/>
<rect x="624.5" y="136.2" width="2.4" height="11.1" fill="#0000ff"/>
<rect x="628.2" y="136.4" width="1" height="14.0" fill="#ff0000"/>
<rect x="627.5" y="139.8" width="2.4" height="7.8" fill="#ff0000"/>
<rect x="631.3" y="139.7" width="1" height="16.5" fill="#ff0000"/>
<rect x="630.6" y="143.7" width="2.4" height="9.2" fill="#ff0000"/>
<rect x="634.3" y="146.3" width="1" height="12.3" fill="#ff0000"/>
<rect x="633.6" y="148.4" width="2.4" height="8.5" fill="#ff0000"/>
<rect x="637.2" y="146.3" width="1" height="11.5" fill="#ff0000"/>
<rect x="636.5" y="148.3" width="2.4" height="7.9" fill="#ff0000"/>
<rect x="640.4" y="146.3" width="1" height="8.2" fill="#ff0000"/>
<rect x="639.7" y="147.7" width="2.4" height="5.7" fill="#ff0000"/>
<rect x="643.2" y="151.2" width="1" height="22.3" fill="#ff0000"/>
<rect x="642.5" y="156.6" width="2.4" height="12.5" fill="#ff0000"/>
<rect x="646.2" y="151.2" width="1" height="11.6" fill="#ff0000"/>
<rect x="645.5" y="153.2" width="2.4" height="8.0" fill="#ff0000"/>
<rect x="649.3" y="154.5" width="1" height="13.2" fill="#ff0000"/>
<rect x="648.6" y="156.7" width="2.4" height="9.1" fill="#ff0000"/>
<rect x="652.3" y="161.0" width="1" height="14.0" fill="#ff0000"/>
<rect x="651.6" y="164.4" width="2.4" height="7.8" fill="#ff0000"/>
<rect x="655.2" y="161.0" width="1" height="16.6" fill="#ff0000"/>
<rect x="654.5" y="165.0" width="2.4" height="9.3" fill="#ff0000"/>
<rect x="658.4" y="153.7" width="1" height="15.7" fill="#0000ff"/>
<rect x="657.7" y="157.5" width="2.4" height="8.8" fill="#0000ff"/>
<rect x="661.3" y="139.7" width="1" height="16.5" fill="#0000ff"/>
<rect x="660.6" y="143.7" width="2.4" height="9.2" fill="#0000ff"/>
<rect x="664.3" y="140.5" width="1" height="14.0" fill="#0000ff"/>
<rect x="663.6" y="143.9" width="2.4" height="7.8" fill="#0000ff"/>
<rect x="667.4" y="151.2" width="1" height="18.2" fill="#ff0000"/>
<rect x="666.7" y="155.6" width="2.4" height="10.2" fill="#ff0000"/>
<rect x="670.4" y="152.0" width="1" height="10.0" fill="#ff0000"/>
<rect x="669.7" y="153.7" width="2.4" height="6.9" fill="#ff0000"/>
<rect x="673.4" y="154.5" width="1" height="16.5" fill="#ff0000"/>
<rect x="672.7" y="158.5" width="2.4" height="9.2" fill="#ff0000"/>
<rect x="676.5" y="164.4" width="1" height="12.4" fill="#ff0000"/>
<rect x="675.8" y="166.5" width="2.4" height="8.6" fill="#ff0000"/>
<rect x="679.5" y="154.5" width="1" height="21.5" fill="#ff0000"/>
<rect x="678.8" y="159.7" width="2.4" height="12.0" fill="#ff0000"/>
<rect x="682.5" y="154.5" width="1" height="9.9" fill="#0000ff"/>
<rect x="681.8" y="156.2" width="2.4" height="6.8" fill="#0000ff"/>
<rect x="685.4" y="128.0" width="1" height="29.8" fill="#0000ff"/>
<rect x="684.7" y="135.2" width="2.4" height="16.7" fill="#0000ff"/>
<rect x="688.5" y="129.0" width="1" height="15.6" fill="#0000ff"/>
<rect x="687.8" y="132.7" width="2.4" height="8.7" fill="#0000ff"/>
<rect x="691.5" y="138.0" width="1" height="21.5" fill="#ff0000"/>
<rect x="690.8" y="143.2" width="2.4" height="12.0" fill="#ff0000"/>
<rect x="694.5" y="151.2" width="1" height="9.1" fill="#ff0000"/>
<rect x="693.8" y="152.7" width="2.4" height="6.3" fill="#ff0000"/>
<rect x="697.5" y="143.8" width="1" height="9.1" fill="#0000ff"/>
<rect x="696.8" y="145.3" width="2.4" height="6.3" fill="#0000ff"/>
<rect x="700.5" y="145.4" width="1" height="9.1" fill="#ff0000"/>
<rect x="699.8" y="146.9" width="2.4" height="6.3" fill="#ff0000"/>
<rect x="703.5" y="147.0" width="1" height="10.8" fill="#ff0000"/>
<rect x="702.8" y="148.8" width="2.4" height="7.5" fill="#ff0000"/>
<rect x="706.5" y="139.7" width="1" height="9.0" fill="#0000ff"/>
<rect x="705.8" y="141.2" width="2.4" height="6.2" fill="#0000ff"/>
<rect x="709.5" y="138.8" width="1" height="7.5" fill="#0000ff"/>
<rect x="708.8" y="139.6" width="2.4" height="6.0" fill="#0000ff"/>
<rect x="712.5" y="134.7" width="1" height="17.3" fill="#ff0000"/>
<rect x="711.8" y="138.9" width="2.4" height="9.7" fill="#ff0000"/>
<rect x="715.5" y="142.0" width="1" height="9.2" fill="#ff0000"/>
<rect x="714.8" y="143.6" width="2.4" height="6.3" fill="#ff0000"/>
<rect x="718.5" y="142.0" width="1" height="7.6" fill="#0000ff"/>
<rect x="717.8" y="142.8" width="2.4" height="6.1" fill="#0000ff"/>
<rect x="721.5" y="138.0" width="1" height="8.3" fill="#0000ff"/>
<rect x="720.8" y="139.4" width="2.4" height="5.7" fill="#0000ff"/>
<rect x="724.5" y="121.5" width="1" height="19.8" fill="#0000ff"/>
<rect x="723.8" y="126.3" width="2.4" height="11.1" fill="#0000ff"/>
<rect x="727.5" y="121.5" width="1" height="11.5" fill="#0000ff"/>
<rect x="726.8" y="123.5" width="2.4" height="7.9" fill="#0000ff"/>
<rect x="730.5" y="107.5" width="1" height="19.0" fill="#0000ff"/>
<rect x="729.8" y="112.1" width="2.4" height="10.6" fill="#0000ff"/>
<rect x="733.5" y="103.0" width="1" height="21.0" fill="#0000ff"/>
<rect x="732.8" y="108.0" width="2.4" height="11.8" fill="#0000ff"/>
<rect x="736.5" y="111.6" width="1" height="9.9" fill="#0000ff"/>
<rect x="735.8" y="113.3" width="2.4" height="6.8" fill="#0000ff"/>
<rect x="739.9" y="114.0" width="1" height="10.8" fill="#ff0000"/>
<rect x="739.2" y="115.8" width="2.4" height="7.5" fill="#ff0000"/>
<rect x="742.9" y="122.0" width="1" height="11.7" fill="#ff0000"/>
<rect x="742.2" y="124.0" width="2.4" height="8.1" fill="#ff0000"/>
<rect x="745.9" y="116.6" width="1" height="12.4" fill="#0000ff"/>
<rect x="745.2" y="118.7" width="2.4" height="8.6" fill="#0000ff"/>
<rect x="748.8" y="116.6" width="1" height="10.8" fill="#0000ff"/>
<rect x="748.1" y="118.4" width="2.4" height="7.5" fill="#0000ff"/>
<rect x="751.9" y="112.0" width="1" height="8.0" fill="#0000ff"/>
<rect x="751.2" y="113.4" width="2.4" height="5.5" fill="#0000ff"/>
<rect x="754.9" y="106.7" width="1" height="86.3" fill="#ff0000"/>
<rect x="754.2" y="117.0" width="2.4" height="64.0" fill="#ff0000"/>
<rect x="758.0" y="163.3" width="1" height="28.7" fill="#ff0000"/>
<rect x="757.3" y="170.2" width="2.4" height="16.1" fill="#ff0000"/>
<rect x="760.9" y="169.6" width="1" height="40.4" fill="#ff0000"/>
<rect x="760.2" y="179.3" width="2.4" height="22.6" fill="#ff0000"/>
<rect x="763.9" y="181.3" width="1" height="28.7" fill="#ff0000"/>
<rect x="763.2" y="188.2" width="2.4" height="16.1" fill="#ff0000"/>
<rect x="767.0" y="188.5" width="1" height="12.5" fill="#ff0000"/>
<rect x="766.3" y="190.6" width="2.4" height="8.6" fill="#ff0000"/>
<rect x="769.9" y="170.5" width="1" height="27.9" fill="#0000ff"/>
<rect x="769.2" y="177.2" width="2.4" height="15.6" fill="#0000ff"/>
<rect x="772.9" y="158.0" width="1" height="16.0" fill="#0000ff"/>
<rect x="772.2" y="161.8" width="2.4" height="9.0" fill="#0000ff"/>
<rect x="775.8" y="152.5" width="1" height="14.5" fill="#0000ff"/>
<rect x="775.1" y="156.0" width="2.4" height="8.1" fill="#0000ff"/>
<rect x="778.8" y="140.0" width="1" height="16.0" fill="#0000ff"/>
<rect x="778.1" y="143.8" width="2.4" height="9.0" fill="#0000ff"/>
<rect x="781.9" y="133.7" width="1" height="13.3" fill="#0000ff"/>
<rect x="781.2" y="136.0" width="2.4" height="9.2" fill="#0000ff"/>
<rect x="784.8" y="135.5" width="1" height="9.9" fill="#0000ff"/>
<rect x="784.1" y="137.2" width="2.4" height="6.8" fill="#0000ff"/>
<rect x="787.8" y="129.0" width="1" height="27.0" fill="#0000ff"/>
<rect x="787.1" y="135.5" width="2.4" height="15.1" fill="#0000ff"/>
<rect x="790.9" y="149.0" width="1" height="32.3" fill="#ff0000"/>
<rect x="790.2" y="156.8" width="2.4" height="18.1" fill="#ff0000"/>
<rect x="794.0" y="174.0" width="1" height="25.3" fill="#ff0000"/>
<rect x="793.3" y="180.1" width="2.4" height="14.2" fill="#ff0000"/>
<rect x="796.8" y="185.0" width="1" height="21.5" fill="#ff0000"/>
<rect x="796.1" y="190.2" width="2.4" height="12.0" fill="#ff0000"/>
<rect x="799.9" y="190.3" width="1" height="12.7" fill="#ff0000"/>
<rect x="799.2" y="192.5" width="2.4" height="8.8" fill="#ff0000"/>
<rect x="802.9" y="188.5" width="1" height="14.5" fill="#ff0000"/>
<rect x="802.2" y="192.0" width="2.4" height="8.1" fill="#ff0000"/>
<rect x="805.8" y="185.0" width="1" height="16.0" fill="#0000ff"/>
<rect x="805.1" y="188.8" width="2.4" height="9.0" fill="#0000ff"/>
<rect x="808.9" y="168.7" width="1" height="26.1" fill="#0000ff"/>
<rect x="808.2" y="175.0" width="2.4" height="14.6" fill="#0000ff"/>
<rect x="811.9" y="163.3" width="1" height="10.7" fill="#0000ff"/>
<rect x="811.2" y="165.1" width="2.4" height="7.4" fill="#0000ff"/>
<rect x="814.8" y="158.0" width="1" height="14.3" fill="#0000ff"/>
<rect x="814.1" y="161.4" width="2.4" height="8.0" fill="#0000ff"/>
<rect x="817.9" y="166.0" width="1" height="17.0" fill="#ff0000"/>
<rect x="817.2" y="170.1" width="2.4" height="9.5" fill="#ff0000"/>
<rect x="820.9" y="156.0" width="1" height="14.5" fill="#0000ff"/>
<rect x="820.2" y="159.5" width="2.4" height="8.1" fill="#0000ff"/>
<rect x="823.8" y="141.8" width="1" height="19.7" fill="#0000ff"/>
<rect x="823.1" y="146.5" width="2.4" height="11.0" fill="#0000ff"/>
<rect x="826.9" y="149.0" width="1" height="9.0" fill="#0000ff"/>
<rect x="826.2" y="150.5" width="2.4" height="6.2" fill="#0000ff"/>
<rect x="829.9" y="145.4" width="1" height="10.6" fill="#0000ff"/>
<rect x="829.2" y="147.2" width="2.4" height="7.3" fill="#0000ff"/>
<rect x="832.8" y="126.5" width="1" height="17.1" fill="#0000ff"/>
<rect x="832.1" y="130.6" width="2.4" height="9.6" fill="#0000ff"/>
<rect x="835.9" y="124.7" width="1" height="15.3" fill="#0000ff"/>
<rect x="835.2" y="128.4" width="2.4" height="8.6" fill="#0000ff"/>
<rect x="838.9" y="126.5" width="1" height="13.5" fill="#0000ff"/>
<rect x="838.2" y="128.8" width="2.4" height="9.3" fill="#0000ff"/>
<rect x="841.8" y="127.4" width="1" height="12.6" fill="#0000ff"/>
<rect x="841.1" y="129.5" width="2.4" height="8.7" fill="#0000ff"/>
<rect x="844.9" y="123.8" width="1" height="9.9" fill="#0000ff"/>
<rect x="844.2" y="125.5" width="2.4" height="6.8" fill="#0000ff"/>
<rect x="847.9" y="122.0" width="1" height="3.6" fill="#0000ff"/>
<rect x="847.2" y="122.4" width="2.4" height="2.9" fill="#0000ff"/>
<rect x="850.8" y="112.0" width="1" height="19.0" fill="#0000ff"/>
<rect x="850.1" y="116.6" width="2.4" height="10.6" fill="#0000ff"/>
<rect x="853.8" y="122.0" width="1" height="14.4" fill="#ff0000"/>
<rect x="853.1" y="125.5" width="2.4" height="8.1" fill="#ff0000"/>
<rect x="856.9" y="111.0" width="1" height="14.6" fill="#0000ff"/>
<rect x="856.2" y="114.5" width="2.4" height="8.2" fill="#0000ff"/>
<rect x="860.1" y="104.0" width="1" height="14.4" fill="#0000ff"/>
<rect x="859.4" y="107.5" width="2.4" height="8.1" fill="#0000ff"/>
<rect x="863.2" y="99.2" width="1" height="8.8" fill="#0000ff"/>
<rect x="862.5" y="100.7" width="2.4" height="6.1" fill="#0000ff"/>
<rect x="866.2" y="102.0" width="1" height="3.5" fill="#0000ff"/>
<rect x="865.5" y="102.3" width="2.4" height="2.8" fill="#0000ff"/>
<rect x="869.2" y="100.0" width="1" height="9.7" fill="#0000ff"/>
<rect x="868.5" y="101.6" width="2.4" height="6.7" fill="#0000ff"/>
<rect x="872.5" y="107.5" width="1" height="6.0" fill="#ff0000"/>
<rect x="871.8" y="108.1" width="2.4" height="4.8" fill="#ff0000"/>
<rect x="875.5" y="97.7" width="1" height="19.3" fill="#0000ff"/>
<rect x="874.8" y="102.3" width="2.4" height="10.8" fill="#0000ff"/>
<rect x="878.5" y="100.0" width="1" height="31.5" fill="#ff0000"/>
<rect x="877.8" y="101.5" width="2.4" height="21.0" fill="#ff0000"/>
<rect x="881.8" y="104.5" width="1" height="24.5" fill="#ff0000"/>
<rect x="881.1" y="110.4" width="2.4" height="13.7" fill="#ff0000"/>
<polyline points="4.0,200.0 12.0,207.0" fill="none" stroke="#ffc800" stroke-width="1.4" stroke-linejoin="round" stroke-linecap="round"/>
<polyline points="122.0,243.0 126.0,247.0 130.0,251.5 134.0,257.0 138.0,264.5 142.0,274.5 146.0,286.5 150.0,298.5 154.0,312.0 158.0,325.5 161.5,337.0 165.0,346.5 169.0,355.0 172.3,361.0 176.0,365.5 180.0,368.3" fill="none" stroke="#ffc800" stroke-width="1.4" stroke-linejoin="round" stroke-linecap="round"/>
<polyline points="180.0,368.3 182.0,369.0" fill="none" stroke="#ffffff" stroke-width="1.4" stroke-linejoin="round" stroke-linecap="round"/>
<polyline points="182.0,369.0 186.0,366.5 189.7,363.0 193.0,359.8 196.0,356.5 198.4,352.6 200.5,349.0 202.4,345.0 204.5,338.0 207.0,331.0 209.5,325.0 212.0,319.0 214.2,314.5 216.5,309.5 218.7,305.5 221.0,303.0 223.5,301.3 227.0,300.1 228.0,300.1" fill="none" stroke="#14b4f0" stroke-width="1.4" stroke-linejoin="round" stroke-linecap="round"/>
<polyline points="228.0,300.0 230.0,300.5" fill="none" stroke="#ffffff" stroke-width="1.4" stroke-linejoin="round" stroke-linecap="round"/>
<polyline points="230.0,300.5 235.0,306.0 239.0,308.5 243.0,310.5 248.5,313.9 252.0,317.0 255.3,320.6 259.8,325.1 262.0,327.0 264.3,328.3 267.0,328.7 270.0,328.6 277.0,329.5" fill="none" stroke="#ffc800" stroke-width="1.4" stroke-linejoin="round" stroke-linecap="round"/>
<polyline points="277.0,329.5 279.0,329.3" fill="none" stroke="#ffffff" stroke-width="1.4" stroke-linejoin="round" stroke-linecap="round"/>
<polyline points="279.0,329.3 285.0,326.0 292.0,319.0 298.0,313.0 303.0,310.6 307.0,309.7" fill="none" stroke="#14b4f0" stroke-width="1.4" stroke-linejoin="round" stroke-linecap="round"/>
<polyline points="307.0,309.7 309.0,309.8" fill="none" stroke="#ffffff" stroke-width="1.4" stroke-linejoin="round" stroke-linecap="round"/>
<polyline points="309.0,309.8 313.0,311.0 318.0,313.0 321.0,313.6" fill="none" stroke="#ffc800" stroke-width="1.4" stroke-linejoin="round" stroke-linecap="round"/>
<polyline points="321.0,313.6 323.0,313.5" fill="none" stroke="#ffffff" stroke-width="1.4" stroke-linejoin="round" stroke-linecap="round"/>
<polyline points="323.0,313.5 328.0,311.0 334.0,306.0 340.0,298.0 346.0,288.0 352.0,277.0 358.0,271.0 364.0,269.5 370.0,266.5 375.0,261.5 379.0,256.0 383.0,253.7 385.0,253.2" fill="none" stroke="#14b4f0" stroke-width="1.4" stroke-linejoin="round" stroke-linecap="round"/>
<polyline points="385.0,253.2 387.0,253.2" fill="none" stroke="#ffffff" stroke-width="1.4" stroke-linejoin="round" stroke-linecap="round"/>
<polyline points="387.0,253.2 395.0,258.0 405.0,263.0 415.0,267.5 425.0,270.0 435.0,274.0 443.0,277.5 447.0,277.7" fill="none" stroke="#ffc800" stroke-width="1.4" stroke-linejoin="round" stroke-linecap="round"/>
<polyline points="447.0,277.7 450.0,277.5" fill="none" stroke="#ffffff" stroke-width="1.4" stroke-linejoin="round" stroke-linecap="round"/>
<polyline points="450.0,277.5 455.0,276.5 462.0,274.8 465.0,274.5" fill="none" stroke="#14b4f0" stroke-width="1.4" stroke-linejoin="round" stroke-linecap="round"/>
<polyline points="465.0,274.5 467.0,274.5" fill="none" stroke="#ffffff" stroke-width="1.4" stroke-linejoin="round" stroke-linecap="round"/>
<polyline points="467.0,274.5 472.0,275.0 480.0,276.5 483.0,277.2" fill="none" stroke="#ffc800" stroke-width="1.4" stroke-linejoin="round" stroke-linecap="round"/>
<polyline points="483.0,277.2 486.0,277.3" fill="none" stroke="#ffffff" stroke-width="1.4" stroke-linejoin="round" stroke-linecap="round"/>
<polyline points="486.0,277.3 490.0,277.0 495.0,271.5 500.0,266.5 508.0,264.5 511.0,264.5" fill="none" stroke="#14b4f0" stroke-width="1.4" stroke-linejoin="round" stroke-linecap="round"/>
<polyline points="511.0,264.5 513.0,264.7" fill="none" stroke="#ffffff" stroke-width="1.4" stroke-linejoin="round" stroke-linecap="round"/>
<polyline points="513.0,264.7 517.0,265.3" fill="none" stroke="#ffc800" stroke-width="1.4" stroke-linejoin="round" stroke-linecap="round"/>
<polyline points="517.0,265.3 519.0,265.0" fill="none" stroke="#ffffff" stroke-width="1.4" stroke-linejoin="round" stroke-linecap="round"/>
<polyline points="519.0,265.0 523.0,260.0 528.0,250.0 533.0,238.0 538.0,227.5 543.0,219.5 548.0,216.0 555.0,212.0 562.0,205.5 568.0,199.0 575.0,192.5 582.0,187.0 590.0,182.5 597.0,181.0 605.0,177.0 612.0,172.5 618.0,166.0 624.0,157.5 630.0,150.0 636.0,144.8 642.0,141.8 647.0,140.7" fill="none" stroke="#14b4f0" stroke-width="1.4" stroke-linejoin="round" stroke-linecap="round"/>
<polyline points="647.0,140.7 649.0,140.8" fill="none" stroke="#ffffff" stroke-width="1.4" stroke-linejoin="round" stroke-linecap="round"/>
<polyline points="649.0,140.8 655.0,143.0 662.0,144.8 670.0,146.0 676.0,150.5 681.0,155.0" fill="none" stroke="#ffc800" stroke-width="1.4" stroke-linejoin="round" stroke-linecap="round"/>
<polyline points="681.0,155.0 686.0,154.5 692.0,153.5 700.0,151.5 708.0,149.3 716.0,147.0 724.0,143.3 730.0,137.5 736.0,130.5 742.0,125.0 748.0,121.5 753.0,119.0" fill="none" stroke="#14b4f0" stroke-width="1.4" stroke-linejoin="round" stroke-linecap="round"/>
<polyline points="753.0,119.0 755.0,118.7" fill="none" stroke="#ffffff" stroke-width="1.4" stroke-linejoin="round" stroke-linecap="round"/>
<polyline points="755.0,118.7 759.0,124.0 764.0,135.0 769.0,147.5 774.0,157.0 779.0,161.5 782.0,162.0" fill="none" stroke="#ffc800" stroke-width="1.4" stroke-linejoin="round" stroke-linecap="round"/>
<polyline points="782.0,162.0 788.0,162.2" fill="none" stroke="#ffffff" stroke-width="1.4" stroke-linejoin="round" stroke-linecap="round"/>
<polyline points="788.0,162.2 793.0,167.0 798.0,174.0 803.0,181.5 808.0,186.5 811.0,188.0" fill="none" stroke="#ffc800" stroke-width="1.4" stroke-linejoin="round" stroke-linecap="round"/>
<polyline points="811.0,188.0 815.0,188.3" fill="none" stroke="#ffffff" stroke-width="1.4" stroke-linejoin="round" stroke-linecap="round"/>
<polyline points="815.0,188.3 820.0,186.0 826.0,180.0 832.0,172.0 838.0,163.0 844.0,153.0 850.0,142.5 856.0,132.5 862.0,122.0 866.0,115.0 872.0,106.5 878.0,101.0 882.7,99.2" fill="none" stroke="#14b4f0" stroke-width="1.4" stroke-linejoin="round" stroke-linecap="round"/>
<circle cx="126.5" cy="245" r="6.3" fill="none" stroke="#ffd400" stroke-width="1.6"/><circle cx="126.5" cy="245" r="2.4" fill="#ffd400"/>
<path d="M124.7,250 V269.5 M116.0,260.1 L124.7,269.5 L133.4,260.1" fill="none" stroke="#ffd400" stroke-width="2.7" stroke-linejoin="miter"/>
<path d="M205.5,301 V283 M196.8,292.4 L205.5,283 L214.2,292.4" fill="none" stroke="#18e4ec" stroke-width="2.7" stroke-linejoin="miter"/>
<path d="M233,317 V335.5 M224.3,326.1 L233,335.5 L241.7,326.1" fill="none" stroke="#ffd400" stroke-width="2.7" stroke-linejoin="miter"/>
<circle cx="252" cy="296" r="6.3" fill="none" stroke="#ffd400" stroke-width="1.6"/><circle cx="252" cy="296" r="2.4" fill="#ffd400"/>
<path d="M338.5,303 V285 M329.8,294.4 L338.5,285 L347.2,294.4" fill="none" stroke="#18e4ec" stroke-width="2.7" stroke-linejoin="miter"/>
<path d="M414,248.4 V266.8 M405.3,257.40000000000003 L414,266.8 L422.7,257.40000000000003" fill="none" stroke="#ffd400" stroke-width="2.7" stroke-linejoin="miter"/>
<circle cx="481" cy="261.4" r="6.4" fill="none" stroke="#ffd400" stroke-width="1.6"/><circle cx="481" cy="261.4" r="2.4" fill="#ffd400"/>
<path d="M498.3,277 V259.4 M489.6,268.79999999999995 L498.3,259.4 L507.0,268.79999999999995" fill="none" stroke="#18e4ec" stroke-width="2.7" stroke-linejoin="miter"/>
<circle cx="498.7" cy="277.1" r="6.6" fill="none" stroke="#18e4ec" stroke-width="1.6"/><circle cx="498.7" cy="277.1" r="2.4" fill="#18e4ec"/>
<path d="M679.5,138 V157 M672.0,148.8 L679.5,157 L687.0,148.8" fill="none" stroke="#ffd400" stroke-width="2.7" stroke-linejoin="miter"/>
<path d="M688,162 V143 M680.5,151.2 L688,143 L695.5,151.2" fill="none" stroke="#18e4ec" stroke-width="2.7" stroke-linejoin="miter"/>
<path d="M757.7,142 V160 M749.0,150.60000000000002 L757.7,160 L766.4000000000001,150.60000000000002" fill="none" stroke="#ffd400" stroke-width="2.7" stroke-linejoin="miter"/>
<path d="M839,159 V143.4 M830.7,152.4 L839,143.4 L847.3,152.4" fill="none" stroke="#18e4ec" stroke-width="2.7" stroke-linejoin="miter"/>
<circle cx="839.4" cy="159.8" r="6.9" fill="none" stroke="#18e4ec" stroke-width="1.6"/><circle cx="839.4" cy="159.8" r="2.4" fill="#18e4ec"/>
<circle cx="840.5" cy="160.5" r="18.6" fill="none" stroke="#ff0000" stroke-width="4.2"/>
<path d="M849.4,171.3 L889,111.2" fill="none" stroke="#ff0000" stroke-width="4" stroke-linecap="round"/>
<path d="M884,112.6 L890.4,109.6 L889.6,118.6" fill="none" stroke="#ff0000" stroke-width="3.2" stroke-linecap="round" stroke-linejoin="round"/>
<path d="M884.5,82 h7 l-3.5,4 z" fill="#9aa4b4"/>
<path d="M6.5,87 h6 l-3,3.8 z" fill="#fff"/>
<text x="16" y="91.8" font-size="8" fill="#fff" textLength="45" lengthAdjust="spacingAndGlyphs">USDJPY,Daily</text>
<rect x="988" y="90.5" width="3" height="1" fill="#c8c8c8"/>
<text x="992.5" y="93.4" font-size="8" fill="#fff" textLength="24.5" lengthAdjust="spacingAndGlyphs">160.420</text>
<rect x="988" y="115.5" width="3" height="1" fill="#c8c8c8"/>
<text x="992.5" y="118.4" font-size="8" fill="#fff" textLength="24.5" lengthAdjust="spacingAndGlyphs">158.670</text>
<rect x="988" y="140.3" width="3" height="1" fill="#c8c8c8"/>
<text x="992.5" y="143.2" font-size="8" fill="#fff" textLength="24.5" lengthAdjust="spacingAndGlyphs">156.920</text>
<rect x="988" y="165.2" width="3" height="1" fill="#c8c8c8"/>
<text x="992.5" y="168.1" font-size="8" fill="#fff" textLength="24.5" lengthAdjust="spacingAndGlyphs">155.170</text>
<rect x="988" y="190.0" width="3" height="1" fill="#c8c8c8"/>
<text x="992.5" y="192.9" font-size="8" fill="#fff" textLength="24.5" lengthAdjust="spacingAndGlyphs">153.420</text>
<rect x="988" y="214.9" width="3" height="1" fill="#c8c8c8"/>
<text x="992.5" y="217.8" font-size="8" fill="#fff" textLength="24.5" lengthAdjust="spacingAndGlyphs">151.670</text>
<rect x="988" y="239.8" width="3" height="1" fill="#c8c8c8"/>
<text x="992.5" y="242.7" font-size="8" fill="#fff" textLength="24.5" lengthAdjust="spacingAndGlyphs">149.970</text>
<rect x="988" y="264.7" width="3" height="1" fill="#c8c8c8"/>
<text x="992.5" y="267.6" font-size="8" fill="#fff" textLength="24.5" lengthAdjust="spacingAndGlyphs">148.220</text>
<rect x="988" y="289.6" width="3" height="1" fill="#c8c8c8"/>
<text x="992.5" y="292.5" font-size="8" fill="#fff" textLength="24.5" lengthAdjust="spacingAndGlyphs">146.470</text>
<rect x="988" y="314.5" width="3" height="1" fill="#c8c8c8"/>
<text x="992.5" y="317.4" font-size="8" fill="#fff" textLength="24.5" lengthAdjust="spacingAndGlyphs">144.720</text>
<rect x="988" y="339.4" width="3" height="1" fill="#c8c8c8"/>
<text x="992.5" y="342.3" font-size="8" fill="#fff" textLength="24.5" lengthAdjust="spacingAndGlyphs">142.970</text>
<rect x="988" y="364.3" width="3" height="1" fill="#c8c8c8"/>
<text x="992.5" y="367.2" font-size="8" fill="#fff" textLength="24.5" lengthAdjust="spacingAndGlyphs">141.220</text>
<rect x="988" y="389.2" width="3" height="1" fill="#c8c8c8"/>
<text x="992.5" y="392.1" font-size="8" fill="#fff" textLength="24.5" lengthAdjust="spacingAndGlyphs">139.520</text>
<rect x="989" y="102.5" width="31" height="8" fill="#fff"/>
<text x="992.5" y="109" font-size="8" fill="#000" textLength="24.5" lengthAdjust="spacingAndGlyphs">159.279</text>
<rect x="988" y="397.0" width="3" height="1" fill="#c8c8c8"/>
<text x="992.5" y="400.5" font-size="8" fill="#fff" textLength="21.5" lengthAdjust="spacingAndGlyphs">1.5346</text>
<rect x="988" y="442.5" width="3" height="1" fill="#c8c8c8"/>
<text x="992.5" y="446.0" font-size="8" fill="#fff" textLength="14" lengthAdjust="spacingAndGlyphs">0.00</text>
<rect x="988" y="506.0" width="3" height="1" fill="#c8c8c8"/>
<text x="992.5" y="509.5" font-size="8" fill="#fff" textLength="24.5" lengthAdjust="spacingAndGlyphs">-2.2985</text>
<text x="990.8" y="526.5" font-size="8" fill="#fff">1</text>
<text x="990.8" y="614.5" font-size="8" fill="#fff">0</text>
<text x="8" y="402.6" font-size="8" fill="#fff" textLength="164" lengthAdjust="spacingAndGlyphs">Signal MACD(12,26,9) 0.8699 0.0000 0.0000 0.9346</text>
<rect x="5" y="443.0" width="1" height="27.9" fill="#b81414"/>
<rect x="8" y="443.0" width="1" height="29.4" fill="#b81414"/>
<rect x="11" y="443.0" width="1" height="30.9" fill="#b81414"/>
<rect x="14" y="443.0" width="1" height="32.4" fill="#b81414"/>
<rect x="17" y="443.0" width="1" height="35.1" fill="#b81414"/>
<rect x="20" y="443.0" width="1" height="37.7" fill="#b81414"/>
<rect x="23" y="443.0" width="1" height="40.3" fill="#b81414"/>
<rect x="26" y="443.0" width="1" height="42.7" fill="#b81414"/>
<rect x="29" y="443.0" width="1" height="45.0" fill="#b81414"/>
<rect x="32" y="443.0" width="1" height="47.2" fill="#b81414"/>
<rect x="35" y="443.0" width="1" height="47.5" fill="#b81414"/>
<rect x="38" y="443.0" width="1" height="45.0" fill="#b81414"/>
<rect x="41" y="443.0" width="1" height="44.1" fill="#b81414"/>
<rect x="44" y="443.0" width="1" height="43.5" fill="#b81414"/>
<rect x="47" y="443.0" width="1" height="43.4" fill="#9c9c9c"/>
<rect x="50" y="443.0" width="1" height="43.4" fill="#9c9c9c"/>
<rect x="53" y="443.0" width="1" height="43.4" fill="#9c9c9c"/>
<rect x="56" y="443.0" width="1" height="45.4" fill="#b81414"/>
<rect x="59" y="443.0" width="1" height="46.6" fill="#b81414"/>
<rect x="62" y="443.0" width="1" height="47.6" fill="#b81414"/>
<rect x="65" y="443.0" width="1" height="47.9" fill="#b81414"/>
<rect x="68" y="443.0" width="1" height="48.2" fill="#b81414"/>
<rect x="71" y="443.0" width="1" height="42.4" fill="#9c9c9c"/>
<rect x="74" y="443.0" width="1" height="39.3" fill="#9c9c9c"/>
<rect x="77" y="443.0" width="1" height="36.3" fill="#9c9c9c"/>
<rect x="80" y="443.0" width="1" height="33.3" fill="#9c9c9c"/>
<rect x="83" y="443.0" width="1" height="30.3" fill="#9c9c9c"/>
<rect x="86" y="443.0" width="1" height="27.1" fill="#9c9c9c"/>
<rect x="89" y="443.0" width="1" height="23.5" fill="#9c9c9c"/>
<rect x="92" y="443.0" width="1" height="20.0" fill="#9c9c9c"/>
<rect x="95" y="443.0" width="1" height="16.2" fill="#9c9c9c"/>
<rect x="98" y="443.0" width="1" height="12.5" fill="#9c9c9c"/>
<rect x="102" y="443.0" width="1" height="8.7" fill="#9c9c9c"/>
<rect x="105" y="443.0" width="1" height="5.6" fill="#9c9c9c"/>
<rect x="108" y="443.0" width="1" height="1.2" fill="#9c9c9c"/>
<rect x="111" y="443.0" width="1" height="1.2" fill="#9c9c9c"/>
<rect x="114" y="443.0" width="1" height="1.2" fill="#9c9c9c"/>
<rect x="117" y="443.0" width="1" height="1.2" fill="#9c9c9c"/>
<rect x="120" y="443.0" width="1" height="1.2" fill="#9c9c9c"/>
<rect x="123" y="443.0" width="1" height="9.8" fill="#b81414"/>
<rect x="126" y="443.0" width="1" height="15.1" fill="#b81414"/>
<rect x="129" y="443.0" width="1" height="18.2" fill="#b81414"/>
<rect x="132" y="443.0" width="1" height="20.8" fill="#b81414"/>
<rect x="135" y="443.0" width="1" height="26.8" fill="#b81414"/>
<rect x="138" y="443.0" width="1" height="33.2" fill="#b81414"/>
<rect x="141" y="443.0" width="1" height="40.0" fill="#b81414"/>
<rect x="144" y="443.0" width="1" height="45.5" fill="#b81414"/>
<rect x="147" y="443.0" width="1" height="50.8" fill="#b81414"/>
<rect x="150" y="443.0" width="1" height="56.0" fill="#b81414"/>
<rect x="153" y="443.0" width="1" height="59.9" fill="#b81414"/>
<rect x="156" y="443.0" width="1" height="62.9" fill="#b81414"/>
<rect x="159" y="443.0" width="1" height="66.0" fill="#b81414"/>
<rect x="162" y="443.0" width="1" height="66.5" fill="#b81414"/>
<rect x="165" y="443.0" width="1" height="62.7" fill="#b81414"/>
<rect x="168" y="443.0" width="1" height="60.6" fill="#b81414"/>
<rect x="171" y="443.0" width="1" height="55.4" fill="#9c9c9c"/>
<rect x="174" y="443.0" width="1" height="53.1" fill="#9c9c9c"/>
<rect x="177" y="443.0" width="1" height="50.4" fill="#9c9c9c"/>
<rect x="180" y="443.0" width="1" height="47.4" fill="#9c9c9c"/>
<rect x="183" y="443.0" width="1" height="39.1" fill="#9c9c9c"/>
<rect x="186" y="443.0" width="1" height="32.0" fill="#9c9c9c"/>
<rect x="189" y="443.0" width="1" height="30.5" fill="#9c9c9c"/>
<rect x="192" y="443.0" width="1" height="27.1" fill="#9c9c9c"/>
<rect x="195" y="443.0" width="1" height="22.6" fill="#9c9c9c"/>
<rect x="198" y="443.0" width="1" height="17.3" fill="#9c9c9c"/>
<rect x="201" y="443.0" width="1" height="10.6" fill="#9c9c9c"/>
<rect x="204" y="443.0" width="1" height="5.6" fill="#9c9c9c"/>
<rect x="207" y="437.7" width="1" height="5.3" fill="#1818b8"/>
<rect x="210" y="435.1" width="1" height="7.9" fill="#1818b8"/>
<rect x="213" y="434.7" width="1" height="8.3" fill="#1818b8"/>
<rect x="216" y="436.0" width="1" height="7.0" fill="#1818b8"/>
<rect x="219" y="438.6" width="1" height="4.4" fill="#1818b8"/>
<rect x="228" y="443.0" width="1" height="5.1" fill="#b81414"/>
<rect x="231" y="443.0" width="1" height="8.9" fill="#b81414"/>
<rect x="234" y="443.0" width="1" height="11.6" fill="#b81414"/>
<rect x="237" y="443.0" width="1" height="10.6" fill="#b81414"/>
<rect x="240" y="443.0" width="1" height="8.8" fill="#b81414"/>
<rect x="243" y="443.0" width="1" height="8.7" fill="#b81414"/>
<rect x="246" y="443.0" width="1" height="9.7" fill="#b81414"/>
<rect x="249" y="443.0" width="1" height="10.5" fill="#b81414"/>
<rect x="252" y="443.0" width="1" height="12.7" fill="#b81414"/>
<rect x="255" y="443.0" width="1" height="13.3" fill="#b81414"/>
<rect x="258" y="443.0" width="1" height="12.9" fill="#b81414"/>
<rect x="261" y="443.0" width="1" height="8.6" fill="#9c9c9c"/>
<rect x="264" y="443.0" width="1" height="6.7" fill="#9c9c9c"/>
<rect x="267" y="443.0" width="1" height="6.0" fill="#9c9c9c"/>
<rect x="270" y="443.0" width="1" height="5.5" fill="#9c9c9c"/>
<rect x="273" y="443.0" width="1" height="5.2" fill="#9c9c9c"/>
<rect x="276" y="443.0" width="1" height="4.1" fill="#9c9c9c"/>
<rect x="279" y="443.0" width="1" height="3.2" fill="#9c9c9c"/>
<rect x="285" y="441.3" width="1" height="1.7" fill="#1818b8"/>
<rect x="288" y="438.9" width="1" height="4.1" fill="#1818b8"/>
<rect x="291" y="435.9" width="1" height="7.1" fill="#1818b8"/>
<rect x="294" y="434.2" width="1" height="8.8" fill="#1818b8"/>
<rect x="297" y="434.8" width="1" height="8.2" fill="#1818b8"/>
<rect x="300" y="435.8" width="1" height="7.2" fill="#1818b8"/>
<rect x="303" y="438.9" width="1" height="4.1" fill="#9c9c9c"/>
<rect x="306" y="439.8" width="1" height="3.2" fill="#9c9c9c"/>
<rect x="309" y="441.3" width="1" height="1.7" fill="#9c9c9c"/>
<rect x="312" y="443.0" width="1" height="1.9" fill="#b81414"/>
<rect x="315" y="443.0" width="1" height="1.9" fill="#b81414"/>
<rect x="318" y="443.0" width="1" height="1.9" fill="#b81414"/>
<rect x="321" y="443.0" width="1" height="1.9" fill="#b81414"/>
<rect x="324" y="439.4" width="1" height="3.6" fill="#1818b8"/>
<rect x="327" y="436.4" width="1" height="6.6" fill="#1818b8"/>
<rect x="330" y="434.1" width="1" height="8.9" fill="#1818b8"/>
<rect x="333" y="431.1" width="1" height="11.9" fill="#1818b8"/>
<rect x="336" y="427.1" width="1" height="15.9" fill="#1818b8"/>
<rect x="339" y="423.1" width="1" height="19.9" fill="#1818b8"/>
<rect x="343" y="417.8" width="1" height="25.2" fill="#1818b8"/>
<rect x="346" y="415.8" width="1" height="27.2" fill="#1818b8"/>
<rect x="349" y="412.9" width="1" height="30.1" fill="#1818b8"/>
<rect x="352" y="411.1" width="1" height="31.9" fill="#1818b8"/>
<rect x="355" y="413.8" width="1" height="29.2" fill="#1818b8"/>
<rect x="358" y="418.1" width="1" height="24.9" fill="#1818b8"/>
<rect x="361" y="421.0" width="1" height="22.0" fill="#9c9c9c"/>
<rect x="364" y="421.7" width="1" height="21.3" fill="#9c9c9c"/>
<rect x="367" y="421.6" width="1" height="21.4" fill="#9c9c9c"/>
<rect x="370" y="419.1" width="1" height="23.9" fill="#9c9c9c"/>
<rect x="373" y="418.1" width="1" height="24.9" fill="#9c9c9c"/>
<rect x="376" y="415.6" width="1" height="27.4" fill="#1818b8"/>
<rect x="379" y="411.5" width="1" height="31.5" fill="#1818b8"/>
<rect x="382" y="415.6" width="1" height="27.4" fill="#1818b8"/>
<rect x="385" y="420.4" width="1" height="22.6" fill="#9c9c9c"/>
<rect x="388" y="423.4" width="1" height="19.6" fill="#9c9c9c"/>
<rect x="391" y="426.5" width="1" height="16.5" fill="#9c9c9c"/>
<rect x="394" y="428.5" width="1" height="14.5" fill="#9c9c9c"/>
<rect x="397" y="429.8" width="1" height="13.2" fill="#9c9c9c"/>
<rect x="400" y="430.8" width="1" height="12.2" fill="#9c9c9c"/>
<rect x="403" y="431.9" width="1" height="11.1" fill="#9c9c9c"/>
<rect x="406" y="432.8" width="1" height="10.2" fill="#9c9c9c"/>
<rect x="409" y="433.7" width="1" height="9.3" fill="#9c9c9c"/>
<rect x="412" y="434.8" width="1" height="8.2" fill="#9c9c9c"/>
<rect x="415" y="435.7" width="1" height="7.3" fill="#9c9c9c"/>
<rect x="418" y="436.4" width="1" height="6.6" fill="#9c9c9c"/>
<rect x="421" y="437.2" width="1" height="5.8" fill="#9c9c9c"/>
<rect x="424" y="437.9" width="1" height="5.1" fill="#9c9c9c"/>
<rect x="427" y="438.7" width="1" height="4.3" fill="#9c9c9c"/>
<rect x="430" y="439.4" width="1" height="3.6" fill="#9c9c9c"/>
<rect x="433" y="440.2" width="1" height="2.8" fill="#9c9c9c"/>
<rect x="436" y="440.9" width="1" height="2.1" fill="#9c9c9c"/>
<rect x="439" y="441.5" width="1" height="1.5" fill="#9c9c9c"/>
<rect x="442" y="442.0" width="1" height="1.0" fill="#9c9c9c"/>
<rect x="451" y="440.0" width="1" height="3.0" fill="#1818b8"/>
<rect x="454" y="440.0" width="1" height="3.0" fill="#1818b8"/>
<rect x="457" y="440.0" width="1" height="3.0" fill="#1818b8"/>
<rect x="460" y="440.0" width="1" height="3.0" fill="#1818b8"/>
<rect x="463" y="442.0" width="1" height="1.0" fill="#9c9c9c"/>
<rect x="466" y="442.0" width="1" height="1.0" fill="#9c9c9c"/>
<rect x="469" y="442.0" width="1" height="1.0" fill="#9c9c9c"/>
<rect x="472" y="442.0" width="1" height="1.0" fill="#9c9c9c"/>
<rect x="475" y="442.0" width="1" height="1.0" fill="#9c9c9c"/>
<rect x="478" y="443.0" width="1" height="1.9" fill="#b81414"/>
<rect x="481" y="443.0" width="1" height="1.9" fill="#b81414"/>
<rect x="484" y="443.0" width="1" height="1.9" fill="#b81414"/>
<rect x="496" y="439.0" width="1" height="4.0" fill="#1818b8"/>
<rect x="499" y="435.0" width="1" height="8.0" fill="#1818b8"/>
<rect x="502" y="431.6" width="1" height="11.4" fill="#1818b8"/>
<rect x="505" y="432.7" width="1" height="10.3" fill="#1818b8"/>
<rect x="508" y="434.1" width="1" height="8.9" fill="#1818b8"/>
<rect x="511" y="437.6" width="1" height="5.4" fill="#1818b8"/>
<rect x="514" y="440.0" width="1" height="3.0" fill="#9c9c9c"/>
<rect x="517" y="440.0" width="1" height="3.0" fill="#9c9c9c"/>
<rect x="520" y="436.0" width="1" height="7.0" fill="#1818b8"/>
<rect x="523" y="425.8" width="1" height="17.2" fill="#1818b8"/>
<rect x="526" y="417.2" width="1" height="25.8" fill="#1818b8"/>
<rect x="529" y="410.7" width="1" height="32.3" fill="#1818b8"/>
<rect x="532" y="409.3" width="1" height="33.7" fill="#1818b8"/>
<rect x="535" y="406.6" width="1" height="36.4" fill="#1818b8"/>
<rect x="538" y="406.1" width="1" height="36.9" fill="#1818b8"/>
<rect x="541" y="408.7" width="1" height="34.3" fill="#1818b8"/>
<rect x="544" y="412.0" width="1" height="31.0" fill="#1818b8"/>
<rect x="547" y="414.8" width="1" height="28.2" fill="#9c9c9c"/>
<rect x="550" y="416.3" width="1" height="26.7" fill="#9c9c9c"/>
<rect x="553" y="415.4" width="1" height="27.6" fill="#9c9c9c"/>
<rect x="556" y="414.1" width="1" height="28.9" fill="#9c9c9c"/>
<rect x="559" y="413.2" width="1" height="29.8" fill="#9c9c9c"/>
<rect x="562" y="411.2" width="1" height="31.8" fill="#1818b8"/>
<rect x="565" y="409.5" width="1" height="33.5" fill="#1818b8"/>
<rect x="568" y="409.6" width="1" height="33.4" fill="#1818b8"/>
<rect x="571" y="411.9" width="1" height="31.1" fill="#1818b8"/>
<rect x="574" y="411.2" width="1" height="31.8" fill="#1818b8"/>
<rect x="577" y="409.3" width="1" height="33.7" fill="#1818b8"/>
<rect x="580" y="407.5" width="1" height="35.5" fill="#1818b8"/>
<rect x="584" y="406.6" width="1" height="36.4" fill="#1818b8"/>
<rect x="587" y="407.1" width="1" height="35.9" fill="#1818b8"/>
<rect x="590" y="407.6" width="1" height="35.4" fill="#1818b8"/>
<rect x="593" y="410.3" width="1" height="32.7" fill="#9c9c9c"/>
<rect x="596" y="411.5" width="1" height="31.5" fill="#9c9c9c"/>
<rect x="599" y="411.5" width="1" height="31.5" fill="#9c9c9c"/>
<rect x="602" y="411.1" width="1" height="31.9" fill="#9c9c9c"/>
<rect x="605" y="410.8" width="1" height="32.2" fill="#9c9c9c"/>
<rect x="608" y="410.8" width="1" height="32.2" fill="#9c9c9c"/>
<rect x="611" y="411.5" width="1" height="31.5" fill="#9c9c9c"/>
<rect x="614" y="410.5" width="1" height="32.5" fill="#1818b8"/>
<rect x="617" y="408.9" width="1" height="34.1" fill="#1818b8"/>
<rect x="620" y="404.5" width="1" height="38.5" fill="#1818b8"/>
<rect x="623" y="400.9" width="1" height="42.1" fill="#1818b8"/>
<rect x="626" y="400.5" width="1" height="42.5" fill="#1818b8"/>
<rect x="629" y="400.6" width="1" height="42.4" fill="#1818b8"/>
<rect x="632" y="402.5" width="1" height="40.5" fill="#1818b8"/>
<rect x="635" y="404.6" width="1" height="38.4" fill="#1818b8"/>
<rect x="638" y="405.2" width="1" height="37.8" fill="#9c9c9c"/>
<rect x="641" y="407.8" width="1" height="35.2" fill="#9c9c9c"/>
<rect x="644" y="411.5" width="1" height="31.5" fill="#9c9c9c"/>
<rect x="647" y="415.1" width="1" height="27.9" fill="#9c9c9c"/>
<rect x="650" y="418.8" width="1" height="24.2" fill="#9c9c9c"/>
<rect x="653" y="422.0" width="1" height="21.0" fill="#9c9c9c"/>
<rect x="656" y="423.8" width="1" height="19.2" fill="#9c9c9c"/>
<rect x="659" y="423.9" width="1" height="19.1" fill="#9c9c9c"/>
<rect x="662" y="421.9" width="1" height="21.1" fill="#9c9c9c"/>
<rect x="665" y="423.5" width="1" height="19.5" fill="#9c9c9c"/>
<rect x="668" y="426.3" width="1" height="16.7" fill="#9c9c9c"/>
<rect x="671" y="427.8" width="1" height="15.2" fill="#9c9c9c"/>
<rect x="674" y="430.6" width="1" height="12.4" fill="#9c9c9c"/>
<rect x="677" y="433.6" width="1" height="9.4" fill="#9c9c9c"/>
<rect x="680" y="434.5" width="1" height="8.5" fill="#9c9c9c"/>
<rect x="683" y="434.7" width="1" height="8.3" fill="#9c9c9c"/>
<rect x="686" y="430.3" width="1" height="12.7" fill="#9c9c9c"/>
<rect x="689" y="430.1" width="1" height="12.9" fill="#1818b8"/>
<rect x="692" y="429.1" width="1" height="13.9" fill="#1818b8"/>
<rect x="695" y="431.5" width="1" height="11.5" fill="#1818b8"/>
<rect x="698" y="431.5" width="1" height="11.5" fill="#1818b8"/>
<rect x="701" y="431.6" width="1" height="11.4" fill="#9c9c9c"/>
<rect x="704" y="431.7" width="1" height="11.3" fill="#9c9c9c"/>
<rect x="707" y="430.2" width="1" height="12.8" fill="#9c9c9c"/>
<rect x="710" y="429.7" width="1" height="13.3" fill="#9c9c9c"/>
<rect x="713" y="430.5" width="1" height="12.5" fill="#9c9c9c"/>
<rect x="716" y="432.0" width="1" height="11.0" fill="#9c9c9c"/>
<rect x="719" y="432.0" width="1" height="11.0" fill="#9c9c9c"/>
<rect x="722" y="432.0" width="1" height="11.0" fill="#9c9c9c"/>
<rect x="725" y="428.9" width="1" height="14.1" fill="#1818b8"/>
<rect x="728" y="426.6" width="1" height="16.4" fill="#1818b8"/>
<rect x="731" y="421.5" width="1" height="21.5" fill="#1818b8"/>
<rect x="734" y="420.4" width="1" height="22.6" fill="#1818b8"/>
<rect x="737" y="419.9" width="1" height="23.1" fill="#1818b8"/>
<rect x="740" y="420.8" width="1" height="22.2" fill="#1818b8"/>
<rect x="743" y="421.9" width="1" height="21.1" fill="#1818b8"/>
<rect x="746" y="423.1" width="1" height="19.9" fill="#1818b8"/>
<rect x="749" y="423.7" width="1" height="19.3" fill="#1818b8"/>
<rect x="752" y="423.9" width="1" height="19.1" fill="#9c9c9c"/>
<rect x="755" y="430.1" width="1" height="12.9" fill="#9c9c9c"/>
<rect x="758" y="438.8" width="1" height="4.2" fill="#9c9c9c"/>
<rect x="761" y="443.0" width="1" height="9.7" fill="#b81414"/>
<rect x="764" y="443.0" width="1" height="16.0" fill="#b81414"/>
<rect x="767" y="443.0" width="1" height="21.5" fill="#b81414"/>
<rect x="770" y="443.0" width="1" height="21.2" fill="#b81414"/>
<rect x="773" y="443.0" width="1" height="17.8" fill="#b81414"/>
<rect x="776" y="443.0" width="1" height="17.5" fill="#b81414"/>
<rect x="779" y="443.0" width="1" height="11.7" fill="#b81414"/>
<rect x="782" y="443.0" width="1" height="6.7" fill="#9c9c9c"/>
<rect x="785" y="443.0" width="1" height="3.2" fill="#9c9c9c"/>
<rect x="788" y="443.0" width="1" height="3.2" fill="#9c9c9c"/>
<rect x="791" y="443.0" width="1" height="6.6" fill="#9c9c9c"/>
<rect x="794" y="443.0" width="1" height="13.9" fill="#b81414"/>
<rect x="797" y="443.0" width="1" height="20.6" fill="#b81414"/>
<rect x="800" y="443.0" width="1" height="24.0" fill="#b81414"/>
<rect x="803" y="443.0" width="1" height="25.3" fill="#b81414"/>
<rect x="806" y="443.0" width="1" height="26.0" fill="#b81414"/>
<rect x="809" y="443.0" width="1" height="22.3" fill="#b81414"/>
<rect x="812" y="443.0" width="1" height="19.0" fill="#b81414"/>
<rect x="815" y="443.0" width="1" height="16.4" fill="#9c9c9c"/>
<rect x="818" y="443.0" width="1" height="14.0" fill="#9c9c9c"/>
<rect x="821" y="443.0" width="1" height="10.7" fill="#9c9c9c"/>
<rect x="825" y="443.0" width="1" height="5.6" fill="#9c9c9c"/>
<rect x="828" y="443.0" width="1" height="1.7" fill="#9c9c9c"/>
<rect x="834" y="438.2" width="1" height="4.8" fill="#1818b8"/>
<rect x="837" y="434.9" width="1" height="8.1" fill="#1818b8"/>
<rect x="840" y="432.2" width="1" height="10.8" fill="#1818b8"/>
<rect x="843" y="428.6" width="1" height="14.4" fill="#1818b8"/>
<rect x="846" y="425.9" width="1" height="17.1" fill="#1818b8"/>
<rect x="849" y="424.0" width="1" height="19.0" fill="#1818b8"/>
<rect x="852" y="422.8" width="1" height="20.2" fill="#1818b8"/>
<rect x="855" y="421.5" width="1" height="21.5" fill="#1818b8"/>
<rect x="858" y="419.0" width="1" height="24.0" fill="#1818b8"/>
<rect x="861" y="415.4" width="1" height="27.6" fill="#1818b8"/>
<rect x="864" y="412.4" width="1" height="30.6" fill="#1818b8"/>
<rect x="867" y="410.8" width="1" height="32.2" fill="#1818b8"/>
<rect x="870" y="411.5" width="1" height="31.5" fill="#1818b8"/>
<rect x="873" y="412.0" width="1" height="31.0" fill="#1818b8"/>
<rect x="876" y="411.5" width="1" height="31.5" fill="#1818b8"/>
<rect x="879" y="415.6" width="1" height="27.4" fill="#9c9c9c"/>
<rect x="882" y="415.6" width="1" height="27.4" fill="#9c9c9c"/>
<polyline points="4.9,463.2 14.6,470.6 24.4,475.4 34.2,481.6 43.9,485.9 53.7,487.7 63.5,488.1 75.7,488.1 83.0,485.2 92.8,475.4 102.5,463.2 112.3,453.5 119.6,448.6 124.5,448.1 131.8,451.0 139.2,459.6 146.5,473.0 153.8,487.7 161.1,497.4 168.5,502.8 174.6,503.8 180.7,501.8 188.0,493.8 195.3,484.0 202.6,469.3 210.0,455.9 217.3,444.9 223.4,440.5 228.3,439.3 234.4,442.5 240.0,446.2 247.3,451.0 254.6,454.0 262.0,454.7 269.3,453.5 279.1,449.8 288.8,443.7 298.6,438.8 305.9,437.1 313.2,437.6 320.6,440.5 326.7,442.0 332.8,440.0 340.1,435.2 347.4,426.6 354.7,419.3 362.1,416.4 369.4,416.4 376.7,417.3 386.5,418.1 393.8,419.3 401.1,422.5 408.5,427.4 415.8,431.5 425.5,434.7 435.3,437.6 445.1,440.0 454.8,441.3 464.6,441.8 471.9,440.5 479.3,441.8 484.1,443.2 487.3,443.2 494.6,443.0 502.0,440.0 509.3,436.9 516.6,436.4 523.9,433.5 531.3,427.8 538.6,420.5 545.9,412.7 553.2,410.5 560.6,411.5 570.3,412.5 577.7,410.8 585.0,409.0 594.7,408.8 604.5,409.0 614.3,410.5 621.6,409.0 628.9,405.9 636.2,403.7 644.8,403.4 650.9,407.1 658.2,413.2 665.5,418.8 672.9,423.0 680.2,426.6 690.0,429.1 699.7,430.3 709.5,429.6 719.3,430.3 720.0,430.8 727.3,429.1 734.6,426.6 742.0,424.2 749.3,421.7 754.2,421.2 759.1,424.2 763.9,430.3 768.8,438.8 773.7,447.4 778.6,453.5 784.7,457.6 790.8,456.4 796.9,454.7 803.0,455.9 809.1,459.6 815.2,462.8 820.1,464.0 825.0,462.5 832.3,455.9 839.6,447.4 847.0,438.8 854.3,431.5 861.6,424.7 868.9,418.8 876.2,414.9 881.6,413.2" fill="none" stroke="#16b016" stroke-width="1.1" stroke-linejoin="round"/>
<text x="8" y="529" font-size="8" fill="#fff" textLength="89" lengthAdjust="spacingAndGlyphs">Signal Square 0.0500 0.2200</text>
<path d="M107,534.5 l3.5,4 h-2 v5 h-3 v-5 h-2 z" fill="none" stroke="#00f0f8" stroke-width="1"/>
<path d="M124,543.5 l3.5,-4 h-2 v-5 h-3 v5 h-2 z" fill="none" stroke="#ffc800" stroke-width="1"/>
<path d="M206.3,534.5 l3.5,4 h-2 v5 h-3 v-5 h-2 z" fill="none" stroke="#00f0f8" stroke-width="1"/>
<path d="M232.7,543.5 l3.5,-4 h-2 v-5 h-3 v5 h-2 z" fill="none" stroke="#ffc800" stroke-width="1"/>
<path d="M284.4,534.5 l3.5,4 h-2 v5 h-3 v-5 h-2 z" fill="none" stroke="#00f0f8" stroke-width="1"/>
<path d="M314,543.5 l3.5,-4 h-2 v-5 h-3 v5 h-2 z" fill="none" stroke="#ffc800" stroke-width="1"/>
<path d="M327.2,534.5 l3.5,4 h-2 v5 h-3 v-5 h-2 z" fill="none" stroke="#00f0f8" stroke-width="1"/>
<path d="M437.3,543.5 l3.5,-4 h-2 v-5 h-3 v5 h-2 z" fill="none" stroke="#ffc800" stroke-width="1"/>
<path d="M453.6,534.5 l3.5,4 h-2 v5 h-3 v-5 h-2 z" fill="none" stroke="#00f0f8" stroke-width="1"/>
<path d="M470.7,543.5 l3.5,-4 h-2 v-5 h-3 v5 h-2 z" fill="none" stroke="#ffc800" stroke-width="1"/>
<path d="M492.7,534.5 l3.5,4 h-2 v5 h-3 v-5 h-2 z" fill="none" stroke="#00f0f8" stroke-width="1"/>
<path d="M760.3,543.5 l3.5,-4 h-2 v-5 h-3 v5 h-2 z" fill="none" stroke="#ffc800" stroke-width="1"/>
<path d="M830.4,534.5 l3.5,4 h-2 v5 h-3 v-5 h-2 z" fill="none" stroke="#00f0f8" stroke-width="1"/>
<path d="M20.9,568.3 l2.8,3.4 M23.7,568.3 l-2.8,3.4 M23.9,568.3 l2.8,3.4 M26.7,568.3 l-2.8,3.4 M26.9,568.3 l2.8,3.4 M29.7,568.3 l-2.8,3.4 M29.9,568.3 l2.8,3.4 M32.7,568.3 l-2.8,3.4 M32.9,568.3 l2.8,3.4 M35.7,568.3 l-2.8,3.4 M35.9,568.3 l2.8,3.4 M38.7,568.3 l-2.8,3.4 " stroke="#ffc800" stroke-width="0.9" fill="none"/>
<path d="M57.0,568.3 l2.8,3.4 M59.8,568.3 l-2.8,3.4 M60.0,568.3 l2.8,3.4 M62.8,568.3 l-2.8,3.4 M63.0,568.3 l2.8,3.4 M65.8,568.3 l-2.8,3.4 " stroke="#ffc800" stroke-width="0.9" fill="none"/>
<path d="M96.0,568.3 l2.8,3.4 M98.8,568.3 l-2.8,3.4 M99.0,568.3 l2.8,3.4 M101.8,568.3 l-2.8,3.4 M102.0,568.3 l2.8,3.4 M104.8,568.3 l-2.8,3.4 M105.0,568.3 l2.8,3.4 M107.8,568.3 l-2.8,3.4 " stroke="#00f0f8" stroke-width="0.9" fill="none"/>
<path d="M111.2,568.3 l2.8,3.4 M114.0,568.3 l-2.8,3.4 " stroke="#00f0f8" stroke-width="0.9" fill="none"/>
<path d="M120.2,568.3 l2.8,3.4 M123.0,568.3 l-2.8,3.4 M123.2,568.3 l2.8,3.4 M126.0,568.3 l-2.8,3.4 M126.2,568.3 l2.8,3.4 M129.0,568.3 l-2.8,3.4 M129.2,568.3 l2.8,3.4 M132.0,568.3 l-2.8,3.4 M132.2,568.3 l2.8,3.4 M135.0,568.3 l-2.8,3.4 M135.2,568.3 l2.8,3.4 M138.0,568.3 l-2.8,3.4 M138.2,568.3 l2.8,3.4 M141.0,568.3 l-2.8,3.4 M141.2,568.3 l2.8,3.4 M144.0,568.3 l-2.8,3.4 M144.2,568.3 l2.8,3.4 M147.0,568.3 l-2.8,3.4 M147.2,568.3 l2.8,3.4 M150.0,568.3 l-2.8,3.4 M150.2,568.3 l2.8,3.4 M153.0,568.3 l-2.8,3.4 M153.2,568.3 l2.8,3.4 M156.0,568.3 l-2.8,3.4 M156.2,568.3 l2.8,3.4 M159.0,568.3 l-2.8,3.4 M159.2,568.3 l2.8,3.4 M162.0,568.3 l-2.8,3.4 " stroke="#ffc800" stroke-width="0.9" fill="none"/>
<path d="M180.3,568.3 l2.8,3.4 M183.1,568.3 l-2.8,3.4 M183.3,568.3 l2.8,3.4 M186.1,568.3 l-2.8,3.4 " stroke="#00f0f8" stroke-width="0.9" fill="none"/>
<path d="M195.4,568.3 l2.8,3.4 M198.2,568.3 l-2.8,3.4 M198.4,568.3 l2.8,3.4 M201.2,568.3 l-2.8,3.4 M201.4,568.3 l2.8,3.4 M204.2,568.3 l-2.8,3.4 M204.4,568.3 l2.8,3.4 M207.2,568.3 l-2.8,3.4 M207.4,568.3 l2.8,3.4 M210.2,568.3 l-2.8,3.4 " stroke="#00f0f8" stroke-width="0.9" fill="none"/>
<path d="M216.9,568.3 l2.8,3.4 M219.7,568.3 l-2.8,3.4 M219.9,568.3 l2.8,3.4 M222.7,568.3 l-2.8,3.4 M222.9,568.3 l2.8,3.4 M225.7,568.3 l-2.8,3.4 M225.9,568.3 l2.8,3.4 M228.7,568.3 l-2.8,3.4 M228.9,568.3 l2.8,3.4 M231.7,568.3 l-2.8,3.4 M231.9,568.3 l2.8,3.4 M234.7,568.3 l-2.8,3.4 M234.9,568.3 l2.8,3.4 M237.7,568.3 l-2.8,3.4 " stroke="#ffc800" stroke-width="0.9" fill="none"/>
<path d="M243.8,568.3 l2.8,3.4 M246.6,568.3 l-2.8,3.4 M246.8,568.3 l2.8,3.4 M249.6,568.3 l-2.8,3.4 M249.8,568.3 l2.8,3.4 M252.6,568.3 l-2.8,3.4 M252.8,568.3 l2.8,3.4 M255.6,568.3 l-2.8,3.4 M255.8,568.3 l2.8,3.4 M258.6,568.3 l-2.8,3.4 " stroke="#ffc800" stroke-width="0.9" fill="none"/>
<path d="M259.1,568.3 l2.8,3.4 M261.9,568.3 l-2.8,3.4 M262.1,568.3 l2.8,3.4 M264.9,568.3 l-2.8,3.4 M265.1,568.3 l2.8,3.4 M267.9,568.3 l-2.8,3.4 M268.1,568.3 l2.8,3.4 M270.9,568.3 l-2.8,3.4 " stroke="#00f0f8" stroke-width="0.9" fill="none"/>
<path d="M279.9,568.3 l2.8,3.4 M282.7,568.3 l-2.8,3.4 M282.9,568.3 l2.8,3.4 M285.7,568.3 l-2.8,3.4 M285.9,568.3 l2.8,3.4 M288.7,568.3 l-2.8,3.4 M288.9,568.3 l2.8,3.4 M291.7,568.3 l-2.8,3.4 M291.9,568.3 l2.8,3.4 M294.7,568.3 l-2.8,3.4 M294.9,568.3 l2.8,3.4 M297.7,568.3 l-2.8,3.4 M297.9,568.3 l2.8,3.4 M300.7,568.3 l-2.8,3.4 " stroke="#00f0f8" stroke-width="0.9" fill="none"/>
<path d="M301.1,568.3 l2.8,3.4 M303.9,568.3 l-2.8,3.4 M304.1,568.3 l2.8,3.4 M306.9,568.3 l-2.8,3.4 M307.1,568.3 l2.8,3.4 M309.9,568.3 l-2.8,3.4 M310.1,568.3 l2.8,3.4 M312.9,568.3 l-2.8,3.4 M313.1,568.3 l2.8,3.4 M315.9,568.3 l-2.8,3.4 " stroke="#ffc800" stroke-width="0.9" fill="none"/>
<path d="M319.0,568.3 l2.8,3.4 M321.8,568.3 l-2.8,3.4 " stroke="#ffc800" stroke-width="0.9" fill="none"/>
<path d="M321.9,568.3 l2.8,3.4 M324.7,568.3 l-2.8,3.4 M324.9,568.3 l2.8,3.4 M327.7,568.3 l-2.8,3.4 M327.9,568.3 l2.8,3.4 M330.7,568.3 l-2.8,3.4 M330.9,568.3 l2.8,3.4 M333.7,568.3 l-2.8,3.4 M333.9,568.3 l2.8,3.4 M336.7,568.3 l-2.8,3.4 M336.9,568.3 l2.8,3.4 M339.7,568.3 l-2.8,3.4 M339.9,568.3 l2.8,3.4 M342.7,568.3 l-2.8,3.4 M342.9,568.3 l2.8,3.4 M345.7,568.3 l-2.8,3.4 M345.9,568.3 l2.8,3.4 M348.7,568.3 l-2.8,3.4 M348.9,568.3 l2.8,3.4 M351.7,568.3 l-2.8,3.4 M351.9,568.3 l2.8,3.4 M354.7,568.3 l-2.8,3.4 " stroke="#00f0f8" stroke-width="0.9" fill="none"/>
<path d="M373.2,568.3 l2.8,3.4 M376.0,568.3 l-2.8,3.4 M376.2,568.3 l2.8,3.4 M379.0,568.3 l-2.8,3.4 M379.2,568.3 l2.8,3.4 M382.0,568.3 l-2.8,3.4 " stroke="#00f0f8" stroke-width="0.9" fill="none"/>
<path d="M409.5,568.3 l2.8,3.4 M412.3,568.3 l-2.8,3.4 " stroke="#ffc800" stroke-width="0.9" fill="none"/>
<path d="M419.1,568.3 l2.8,3.4 M421.9,568.3 l-2.8,3.4 " stroke="#ffc800" stroke-width="0.9" fill="none"/>
<path d="M422.0,568.3 l2.8,3.4 M424.8,568.3 l-2.8,3.4 M425.0,568.3 l2.8,3.4 M427.8,568.3 l-2.8,3.4 " stroke="#00f0f8" stroke-width="0.9" fill="none"/>
<path d="M430.8,568.3 l2.8,3.4 M433.6,568.3 l-2.8,3.4 " stroke="#ffc800" stroke-width="0.9" fill="none"/>
<path d="M436.6,568.3 l2.8,3.4 M439.4,568.3 l-2.8,3.4 M439.6,568.3 l2.8,3.4 M442.4,568.3 l-2.8,3.4 M442.6,568.3 l2.8,3.4 M445.4,568.3 l-2.8,3.4 " stroke="#ffc800" stroke-width="0.9" fill="none"/>
<path d="M446.4,568.3 l2.8,3.4 M449.2,568.3 l-2.8,3.4 M449.4,568.3 l2.8,3.4 M452.2,568.3 l-2.8,3.4 M452.4,568.3 l2.8,3.4 M455.2,568.3 l-2.8,3.4 " stroke="#00f0f8" stroke-width="0.9" fill="none"/>
<path d="M464.0,568.3 l2.8,3.4 M466.8,568.3 l-2.8,3.4 M467.0,568.3 l2.8,3.4 M469.8,568.3 l-2.8,3.4 " stroke="#ffc800" stroke-width="0.9" fill="none"/>
<path d="M473.3,568.3 l2.8,3.4 M476.1,568.3 l-2.8,3.4 M476.3,568.3 l2.8,3.4 M479.1,568.3 l-2.8,3.4 M479.3,568.3 l2.8,3.4 M482.1,568.3 l-2.8,3.4 " stroke="#ffc800" stroke-width="0.9" fill="none"/>
<path d="M494.0,568.3 l2.8,3.4 M496.8,568.3 l-2.8,3.4 M497.0,568.3 l2.8,3.4 M499.8,568.3 l-2.8,3.4 M500.0,568.3 l2.8,3.4 M502.8,568.3 l-2.8,3.4 " stroke="#00f0f8" stroke-width="0.9" fill="none"/>
<path d="M509.4,568.3 l2.8,3.4 M512.2,568.3 l-2.8,3.4 M512.4,568.3 l2.8,3.4 M515.2,568.3 l-2.8,3.4 M515.4,568.3 l2.8,3.4 M518.2,568.3 l-2.8,3.4 " stroke="#ffc800" stroke-width="0.9" fill="none"/>
<path d="M517.9,568.3 l2.8,3.4 M520.7,568.3 l-2.8,3.4 M520.9,568.3 l2.8,3.4 M523.7,568.3 l-2.8,3.4 M523.9,568.3 l2.8,3.4 M526.7,568.3 l-2.8,3.4 M526.9,568.3 l2.8,3.4 M529.7,568.3 l-2.8,3.4 M529.9,568.3 l2.8,3.4 M532.7,568.3 l-2.8,3.4 M532.9,568.3 l2.8,3.4 M535.7,568.3 l-2.8,3.4 M535.9,568.3 l2.8,3.4 M538.7,568.3 l-2.8,3.4 M538.9,568.3 l2.8,3.4 M541.7,568.3 l-2.8,3.4 " stroke="#00f0f8" stroke-width="0.9" fill="none"/>
<path d="M560.7,568.3 l2.8,3.4 M563.5,568.3 l-2.8,3.4 M563.7,568.3 l2.8,3.4 M566.5,568.3 l-2.8,3.4 M566.7,568.3 l2.8,3.4 M569.5,568.3 l-2.8,3.4 " stroke="#00f0f8" stroke-width="0.9" fill="none"/>
<path d="M575.3,568.3 l2.8,3.4 M578.1,568.3 l-2.8,3.4 M578.3,568.3 l2.8,3.4 M581.1,568.3 l-2.8,3.4 M581.3,568.3 l2.8,3.4 M584.1,568.3 l-2.8,3.4 M584.3,568.3 l2.8,3.4 M587.1,568.3 l-2.8,3.4 " stroke="#00f0f8" stroke-width="0.9" fill="none"/>
<path d="M611.9,568.3 l2.8,3.4 M614.7,568.3 l-2.8,3.4 M614.9,568.3 l2.8,3.4 M617.7,568.3 l-2.8,3.4 M617.9,568.3 l2.8,3.4 M620.7,568.3 l-2.8,3.4 M620.9,568.3 l2.8,3.4 M623.7,568.3 l-2.8,3.4 M623.9,568.3 l2.8,3.4 M626.7,568.3 l-2.8,3.4 M626.9,568.3 l2.8,3.4 M629.7,568.3 l-2.8,3.4 M629.9,568.3 l2.8,3.4 M632.7,568.3 l-2.8,3.4 " stroke="#00f0f8" stroke-width="0.9" fill="none"/>
<path d="M671.8,568.3 l2.8,3.4 M674.6,568.3 l-2.8,3.4 M674.8,568.3 l2.8,3.4 M677.6,568.3 l-2.8,3.4 " stroke="#ffc800" stroke-width="0.9" fill="none"/>
<path d="M684.0,568.3 l2.8,3.4 M686.8,568.3 l-2.8,3.4 M687.0,568.3 l2.8,3.4 M689.8,568.3 l-2.8,3.4 " stroke="#00f0f8" stroke-width="0.9" fill="none"/>
<path d="M695.9,568.3 l2.8,3.4 M698.7,568.3 l-2.8,3.4 " stroke="#00f0f8" stroke-width="0.9" fill="none"/>
<path d="M704.7,568.3 l2.8,3.4 M707.5,568.3 l-2.8,3.4 M707.7,568.3 l2.8,3.4 M710.5,568.3 l-2.8,3.4 " stroke="#00f0f8" stroke-width="0.9" fill="none"/>
<path d="M716.4,568.3 l2.8,3.4 M719.2,568.3 l-2.8,3.4 M719.4,568.3 l2.8,3.4 M722.2,568.3 l-2.8,3.4 M722.4,568.3 l2.8,3.4 M725.2,568.3 l-2.8,3.4 M725.4,568.3 l2.8,3.4 M728.2,568.3 l-2.8,3.4 M728.4,568.3 l2.8,3.4 M731.2,568.3 l-2.8,3.4 M731.4,568.3 l2.8,3.4 M734.2,568.3 l-2.8,3.4 M734.4,568.3 l2.8,3.4 M737.2,568.3 l-2.8,3.4 M737.4,568.3 l2.8,3.4 M740.2,568.3 l-2.8,3.4 M740.4,568.3 l2.8,3.4 M743.2,568.3 l-2.8,3.4 " stroke="#00f0f8" stroke-width="0.9" fill="none"/>
<path d="M756.2,568.3 l2.8,3.4 M759.0,568.3 l-2.8,3.4 M759.2,568.3 l2.8,3.4 M762.0,568.3 l-2.8,3.4 M762.2,568.3 l2.8,3.4 M765.0,568.3 l-2.8,3.4 M765.2,568.3 l2.8,3.4 M768.0,568.3 l-2.8,3.4 M768.2,568.3 l2.8,3.4 M771.0,568.3 l-2.8,3.4 " stroke="#ffc800" stroke-width="0.9" fill="none"/>
<path d="M777.0,568.3 l2.8,3.4 M779.8,568.3 l-2.8,3.4 M780.0,568.3 l2.8,3.4 M782.8,568.3 l-2.8,3.4 M783.0,568.3 l2.8,3.4 M785.8,568.3 l-2.8,3.4 " stroke="#00f0f8" stroke-width="0.9" fill="none"/>
<path d="M792.1,568.3 l2.8,3.4 M794.9,568.3 l-2.8,3.4 M795.1,568.3 l2.8,3.4 M797.9,568.3 l-2.8,3.4 M798.1,568.3 l2.8,3.4 M800.9,568.3 l-2.8,3.4 M801.1,568.3 l2.8,3.4 M803.9,568.3 l-2.8,3.4 M804.1,568.3 l2.8,3.4 M806.9,568.3 l-2.8,3.4 " stroke="#ffc800" stroke-width="0.9" fill="none"/>
<path d="M819.0,568.3 l2.8,3.4 M821.8,568.3 l-2.8,3.4 M822.0,568.3 l2.8,3.4 M824.8,568.3 l-2.8,3.4 M825.0,568.3 l2.8,3.4 M827.8,568.3 l-2.8,3.4 M828.0,568.3 l2.8,3.4 M830.8,568.3 l-2.8,3.4 M831.0,568.3 l2.8,3.4 M833.8,568.3 l-2.8,3.4 M834.0,568.3 l2.8,3.4 M836.8,568.3 l-2.8,3.4 M837.0,568.3 l2.8,3.4 M839.8,568.3 l-2.8,3.4 M840.0,568.3 l2.8,3.4 M842.8,568.3 l-2.8,3.4 M843.0,568.3 l2.8,3.4 M845.8,568.3 l-2.8,3.4 M846.0,568.3 l2.8,3.4 M848.8,568.3 l-2.8,3.4 M849.0,568.3 l2.8,3.4 M851.8,568.3 l-2.8,3.4 M852.0,568.3 l2.8,3.4 M854.8,568.3 l-2.8,3.4 M855.0,568.3 l2.8,3.4 M857.8,568.3 l-2.8,3.4 M858.0,568.3 l2.8,3.4 M860.8,568.3 l-2.8,3.4 M861.0,568.3 l2.8,3.4 M863.8,568.3 l-2.8,3.4 M864.0,568.3 l2.8,3.4 M866.8,568.3 l-2.8,3.4 M867.0,568.3 l2.8,3.4 M869.8,568.3 l-2.8,3.4 " stroke="#00f0f8" stroke-width="0.9" fill="none"/>
<rect x="5.4" y="592.3" width="71.0" height="4.6" fill="#ffc800"/>
<rect x="83.5" y="592.3" width="8.1" height="4.6" fill="#ffc800"/>
<rect x="92.8" y="592.3" width="20.8" height="4.6" fill="#00f0f8"/>
<rect x="113.5" y="592.3" width="56.2" height="4.6" fill="#ffc800"/>
<rect x="170.9" y="592.3" width="11.0" height="4.6" fill="#ffc800"/>
<rect x="181.9" y="592.3" width="6.8" height="4.6" fill="#00f0f8"/>
<rect x="189.9" y="592.3" width="3.7" height="4.6" fill="#ffc800"/>
<rect x="193.6" y="592.3" width="22.5" height="4.6" fill="#00f0f8"/>
<rect x="216.1" y="592.3" width="19.5" height="4.6" fill="#ffc800"/>
<rect x="235.6" y="592.3" width="3.2" height="4.6" fill="#00f0f8"/>
<rect x="241.2" y="592.3" width="18.8" height="4.6" fill="#ffc800"/>
<rect x="260.0" y="592.3" width="10.5" height="4.6" fill="#00f0f8"/>
<rect x="270.5" y="592.3" width="7.8" height="4.6" fill="#ffc800"/>
<rect x="278.3" y="592.3" width="5.6" height="4.6" fill="#00f0f8"/>
<rect x="285.7" y="592.3" width="8.5" height="4.6" fill="#00f0f8"/>
<rect x="294.9" y="592.3" width="4.4" height="4.6" fill="#ffc800"/>
<rect x="300.5" y="592.3" width="17.1" height="4.6" fill="#ffc800"/>
<rect x="317.6" y="592.3" width="1.2" height="4.6" fill="#00f0f8"/>
<rect x="318.9" y="592.3" width="4.6" height="4.6" fill="#ffc800"/>
<rect x="323.5" y="592.3" width="11.7" height="4.6" fill="#00f0f8"/>
<rect x="336.9" y="592.3" width="17.8" height="4.6" fill="#00f0f8"/>
<rect x="354.7" y="592.3" width="7.8" height="4.6" fill="#ffc800"/>
<rect x="362.6" y="592.3" width="16.6" height="4.6" fill="#00f0f8"/>
<rect x="379.2" y="592.3" width="16.6" height="4.6" fill="#ffc800"/>
<rect x="395.8" y="592.3" width="7.3" height="4.6" fill="#00f0f8"/>
<rect x="403.1" y="592.3" width="4.9" height="4.6" fill="#ffc800"/>
<rect x="409.2" y="592.3" width="4.6" height="4.6" fill="#ffc800"/>
<rect x="415.3" y="592.3" width="7.8" height="4.6" fill="#ffc800"/>
<rect x="424.6" y="592.3" width="4.6" height="4.6" fill="#ffc800"/>
<rect x="430.4" y="592.3" width="16.6" height="4.6" fill="#ffc800"/>
<rect x="447.0" y="592.3" width="7.3" height="4.6" fill="#00f0f8"/>
<rect x="454.4" y="592.3" width="16.4" height="4.6" fill="#ffc800"/>
<rect x="470.7" y="592.3" width="1.7" height="4.6" fill="#00f0f8"/>
<rect x="472.4" y="592.3" width="11.0" height="4.6" fill="#ffc800"/>
<rect x="496.6" y="592.3" width="9.0" height="4.6" fill="#00f0f8"/>
<rect x="505.6" y="592.3" width="13.9" height="4.6" fill="#ffc800"/>
<rect x="519.6" y="592.3" width="22.0" height="4.6" fill="#00f0f8"/>
<rect x="541.5" y="592.3" width="4.9" height="4.6" fill="#ffc800"/>
<rect x="546.4" y="592.3" width="20.8" height="4.6" fill="#00f0f8"/>
<rect x="574.7" y="592.3" width="66.4" height="4.6" fill="#00f0f8"/>
<rect x="641.1" y="592.3" width="4.9" height="4.6" fill="#ffc800"/>
<rect x="646.0" y="592.3" width="1.2" height="4.6" fill="#00f0f8"/>
<rect x="647.2" y="592.3" width="10.5" height="4.6" fill="#ffc800"/>
<rect x="665.5" y="592.3" width="4.4" height="4.6" fill="#ffc800"/>
<rect x="671.7" y="592.3" width="7.3" height="4.6" fill="#ffc800"/>
<rect x="680.7" y="592.3" width="3.9" height="4.6" fill="#ffc800"/>
<rect x="684.6" y="592.3" width="7.8" height="4.6" fill="#00f0f8"/>
<rect x="692.4" y="592.3" width="4.4" height="4.6" fill="#ffc800"/>
<rect x="696.8" y="592.3" width="1.7" height="4.6" fill="#00f0f8"/>
<rect x="698.5" y="592.3" width="4.4" height="4.6" fill="#ffc800"/>
<rect x="707.5" y="592.3" width="22.5" height="4.6" fill="#00f0f8"/>
<rect x="729.8" y="592.3" width="22.7" height="4.6" fill="#00f0f8"/>
<rect x="752.5" y="592.3" width="20.0" height="4.6" fill="#ffc800"/>
<rect x="785.9" y="592.3" width="22.5" height="4.6" fill="#ffc800"/>
<rect x="808.4" y="592.3" width="6.1" height="4.6" fill="#00f0f8"/>
<rect x="815.9" y="592.3" width="4.9" height="4.6" fill="#ffc800"/>
<rect x="831.1" y="592.3" width="45.2" height="4.6" fill="#00f0f8"/>
<rect x="876.2" y="592.3" width="4.9" height="4.6" fill="#ffc800"/>
<rect x="881.1" y="592.3" width="2.9" height="4.6" fill="#00f0f8"/>
<rect x="5.4" y="608.3" width="87.4" height="6.5" fill="#d80000"/>
<path d="M5.4,611.2 H92.8" stroke="#ff7070" stroke-width="1.6" stroke-dasharray="0.75 0.75" fill="none" opacity="0.75"/>
<rect x="92.8" y="608.3" width="25.6" height="6.5" fill="#0000d8"/>
<path d="M92.8,611.2 H118.4" stroke="#5c5cff" stroke-width="1.6" stroke-dasharray="0.75 0.75" fill="none" opacity="0.75"/>
<rect x="118.4" y="608.3" width="65.2" height="6.5" fill="#d80000"/>
<path d="M118.4,611.2 H183.6" stroke="#ff7070" stroke-width="1.6" stroke-dasharray="0.75 0.75" fill="none" opacity="0.75"/>
<rect x="183.6" y="608.3" width="37.4" height="6.5" fill="#0000d8"/>
<path d="M183.6,611.2 H220.9" stroke="#5c5cff" stroke-width="1.6" stroke-dasharray="0.75 0.75" fill="none" opacity="0.75"/>
<rect x="220.9" y="608.3" width="8.5" height="6.5" fill="#d80000"/>
<path d="M220.9,611.2 H229.5" stroke="#ff7070" stroke-width="1.6" stroke-dasharray="0.75 0.75" fill="none" opacity="0.75"/>
<rect x="229.5" y="608.3" width="6.1" height="6.5" fill="#0000d8"/>
<path d="M229.5,611.2 H235.6" stroke="#5c5cff" stroke-width="1.6" stroke-dasharray="0.75 0.75" fill="none" opacity="0.75"/>
<rect x="235.6" y="608.3" width="4.4" height="6.5" fill="#d80000"/>
<path d="M235.6,611.2 H240.0" stroke="#ff7070" stroke-width="1.6" stroke-dasharray="0.75 0.75" fill="none" opacity="0.75"/>
<rect x="240.0" y="608.3" width="24.4" height="6.5" fill="#d80000"/>
<path d="M240.0,611.2 H264.4" stroke="#ff7070" stroke-width="1.6" stroke-dasharray="0.75 0.75" fill="none" opacity="0.75"/>
<rect x="264.4" y="608.3" width="34.9" height="6.5" fill="#0000d8"/>
<path d="M264.4,611.2 H299.3" stroke="#5c5cff" stroke-width="1.6" stroke-dasharray="0.75 0.75" fill="none" opacity="0.75"/>
<rect x="299.3" y="608.3" width="17.6" height="6.5" fill="#d80000"/>
<path d="M299.3,611.2 H316.9" stroke="#ff7070" stroke-width="1.6" stroke-dasharray="0.75 0.75" fill="none" opacity="0.75"/>
<rect x="316.9" y="608.3" width="2.4" height="6.5" fill="#0000d8"/>
<path d="M316.9,611.2 H319.3" stroke="#5c5cff" stroke-width="1.6" stroke-dasharray="0.75 0.75" fill="none" opacity="0.75"/>
<rect x="319.3" y="608.3" width="5.6" height="6.5" fill="#d80000"/>
<path d="M319.3,611.2 H325.0" stroke="#ff7070" stroke-width="1.6" stroke-dasharray="0.75 0.75" fill="none" opacity="0.75"/>
<rect x="325.0" y="608.3" width="52.5" height="6.5" fill="#0000d8"/>
<path d="M325.0,611.2 H377.5" stroke="#5c5cff" stroke-width="1.6" stroke-dasharray="0.75 0.75" fill="none" opacity="0.75"/>
<rect x="377.5" y="608.3" width="20.0" height="6.5" fill="#d80000"/>
<path d="M377.5,611.2 H397.5" stroke="#ff7070" stroke-width="1.6" stroke-dasharray="0.75 0.75" fill="none" opacity="0.75"/>
<rect x="397.5" y="608.3" width="10.5" height="6.5" fill="#0000d8"/>
<path d="M397.5,611.2 H408.0" stroke="#5c5cff" stroke-width="1.6" stroke-dasharray="0.75 0.75" fill="none" opacity="0.75"/>
<rect x="408.0" y="608.3" width="23.2" height="6.5" fill="#d80000"/>
<path d="M408.0,611.2 H431.2" stroke="#ff7070" stroke-width="1.6" stroke-dasharray="0.75 0.75" fill="none" opacity="0.75"/>
<rect x="431.2" y="608.3" width="4.2" height="6.5" fill="#0000d8"/>
<path d="M431.2,611.2 H435.3" stroke="#5c5cff" stroke-width="1.6" stroke-dasharray="0.75 0.75" fill="none" opacity="0.75"/>
<rect x="435.3" y="608.3" width="13.4" height="6.5" fill="#d80000"/>
<path d="M435.3,611.2 H448.7" stroke="#ff7070" stroke-width="1.6" stroke-dasharray="0.75 0.75" fill="none" opacity="0.75"/>
<rect x="448.7" y="608.3" width="4.4" height="6.5" fill="#0000d8"/>
<path d="M448.7,611.2 H453.1" stroke="#5c5cff" stroke-width="1.6" stroke-dasharray="0.75 0.75" fill="none" opacity="0.75"/>
<rect x="453.1" y="608.3" width="26.9" height="6.5" fill="#d80000"/>
<path d="M453.1,611.2 H480.0" stroke="#ff7070" stroke-width="1.6" stroke-dasharray="0.75 0.75" fill="none" opacity="0.75"/>
<rect x="480.0" y="608.3" width="4.9" height="6.5" fill="#d80000"/>
<path d="M480.0,611.2 H484.9" stroke="#ff7070" stroke-width="1.6" stroke-dasharray="0.75 0.75" fill="none" opacity="0.75"/>
<rect x="484.9" y="608.3" width="1.2" height="6.5" fill="#0000d8"/>
<path d="M484.9,611.2 H486.1" stroke="#5c5cff" stroke-width="1.6" stroke-dasharray="0.75 0.75" fill="none" opacity="0.75"/>
<rect x="486.1" y="608.3" width="10.5" height="6.5" fill="#d80000"/>
<path d="M486.1,611.2 H496.6" stroke="#ff7070" stroke-width="1.6" stroke-dasharray="0.75 0.75" fill="none" opacity="0.75"/>
<rect x="496.6" y="608.3" width="10.7" height="6.5" fill="#0000d8"/>
<path d="M496.6,611.2 H507.3" stroke="#5c5cff" stroke-width="1.6" stroke-dasharray="0.75 0.75" fill="none" opacity="0.75"/>
<rect x="507.3" y="608.3" width="10.5" height="6.5" fill="#d80000"/>
<path d="M507.3,611.2 H517.8" stroke="#ff7070" stroke-width="1.6" stroke-dasharray="0.75 0.75" fill="none" opacity="0.75"/>
<rect x="517.8" y="608.3" width="50.0" height="6.5" fill="#0000d8"/>
<path d="M517.8,611.2 H567.9" stroke="#5c5cff" stroke-width="1.6" stroke-dasharray="0.75 0.75" fill="none" opacity="0.75"/>
<rect x="567.9" y="608.3" width="7.3" height="6.5" fill="#d80000"/>
<path d="M567.9,611.2 H575.2" stroke="#ff7070" stroke-width="1.6" stroke-dasharray="0.75 0.75" fill="none" opacity="0.75"/>
<rect x="575.2" y="608.3" width="83.0" height="6.5" fill="#0000d8"/>
<path d="M575.2,611.2 H658.2" stroke="#5c5cff" stroke-width="1.6" stroke-dasharray="0.75 0.75" fill="none" opacity="0.75"/>
<rect x="658.2" y="608.3" width="28.8" height="6.5" fill="#d80000"/>
<path d="M658.2,611.2 H687.0" stroke="#ff7070" stroke-width="1.6" stroke-dasharray="0.75 0.75" fill="none" opacity="0.75"/>
<rect x="687.0" y="608.3" width="13.4" height="6.5" fill="#0000d8"/>
<path d="M687.0,611.2 H700.5" stroke="#5c5cff" stroke-width="1.6" stroke-dasharray="0.75 0.75" fill="none" opacity="0.75"/>
<rect x="700.5" y="608.3" width="7.3" height="6.5" fill="#d80000"/>
<path d="M700.5,611.2 H707.8" stroke="#ff7070" stroke-width="1.6" stroke-dasharray="0.75 0.75" fill="none" opacity="0.75"/>
<rect x="707.8" y="608.3" width="12.2" height="6.5" fill="#0000d8"/>
<path d="M707.8,611.2 H720.0" stroke="#5c5cff" stroke-width="1.6" stroke-dasharray="0.75 0.75" fill="none" opacity="0.75"/>
<rect x="720.0" y="608.3" width="31.2" height="6.5" fill="#0000d8"/>
<path d="M720.0,611.2 H751.2" stroke="#5c5cff" stroke-width="1.6" stroke-dasharray="0.75 0.75" fill="none" opacity="0.75"/>
<rect x="751.2" y="608.3" width="48.1" height="6.5" fill="#d80000"/>
<path d="M751.2,611.2 H799.3" stroke="#ff7070" stroke-width="1.6" stroke-dasharray="0.75 0.75" fill="none" opacity="0.75"/>
<rect x="799.3" y="608.3" width="12.2" height="6.5" fill="#0000d8"/>
<path d="M799.3,611.2 H811.6" stroke="#5c5cff" stroke-width="1.6" stroke-dasharray="0.75 0.75" fill="none" opacity="0.75"/>
<rect x="811.6" y="608.3" width="20.3" height="6.5" fill="#d80000"/>
<path d="M811.6,611.2 H831.8" stroke="#ff7070" stroke-width="1.6" stroke-dasharray="0.75 0.75" fill="none" opacity="0.75"/>
<rect x="831.8" y="608.3" width="53.7" height="6.5" fill="#0000d8"/>
<path d="M831.8,611.2 H885.5" stroke="#5c5cff" stroke-width="1.6" stroke-dasharray="0.75 0.75" fill="none" opacity="0.75"/>
<rect x="4.9" y="616.5" width="1" height="3" fill="#c8c8c8"/>
<text x="4.2" y="626" font-size="8" fill="#fff" textLength="39.4" lengthAdjust="spacingAndGlyphs">12 Feb 2025</text>
<rect x="53.1" y="616.5" width="1" height="3" fill="#c8c8c8"/>
<text x="52.4" y="626" font-size="8" fill="#fff" textLength="35.8" lengthAdjust="spacingAndGlyphs">6 Mar 2025</text>
<rect x="101.3" y="616.5" width="1" height="3" fill="#c8c8c8"/>
<text x="100.6" y="626" font-size="8" fill="#fff" textLength="39.4" lengthAdjust="spacingAndGlyphs">25 Mar 2025</text>
<rect x="149.5" y="616.5" width="1" height="3" fill="#c8c8c8"/>
<text x="148.8" y="626" font-size="8" fill="#fff" textLength="39.4" lengthAdjust="spacingAndGlyphs">16 Apr 2025</text>
<rect x="197.7" y="616.5" width="1" height="3" fill="#c8c8c8"/>
<text x="197.0" y="626" font-size="8" fill="#fff" textLength="35.8" lengthAdjust="spacingAndGlyphs">8 May 2025</text>
<rect x="245.9" y="616.5" width="1" height="3" fill="#c8c8c8"/>
<text x="245.2" y="626" font-size="8" fill="#fff" textLength="39.4" lengthAdjust="spacingAndGlyphs">30 May 2025</text>
<rect x="294.1" y="616.5" width="1" height="3" fill="#c8c8c8"/>
<text x="293.4" y="626" font-size="8" fill="#fff" textLength="39.4" lengthAdjust="spacingAndGlyphs">23 Jun 2025</text>
<rect x="342.3" y="616.5" width="1" height="3" fill="#c8c8c8"/>
<text x="341.6" y="626" font-size="8" fill="#fff" textLength="39.4" lengthAdjust="spacingAndGlyphs">15 Jul 2025</text>
<rect x="390.5" y="616.5" width="1" height="3" fill="#c8c8c8"/>
<text x="389.8" y="626" font-size="8" fill="#fff" textLength="35.8" lengthAdjust="spacingAndGlyphs">6 Aug 2025</text>
<rect x="438.7" y="616.5" width="1" height="3" fill="#c8c8c8"/>
<text x="438.0" y="626" font-size="8" fill="#fff" textLength="39.4" lengthAdjust="spacingAndGlyphs">28 Aug 2025</text>
<rect x="486.9" y="616.5" width="1" height="3" fill="#c8c8c8"/>
<text x="486.2" y="626" font-size="8" fill="#fff" textLength="39.4" lengthAdjust="spacingAndGlyphs">19 Sep 2025</text>
<rect x="535.1" y="616.5" width="1" height="3" fill="#c8c8c8"/>
<text x="534.4" y="626" font-size="8" fill="#fff" textLength="39.4" lengthAdjust="spacingAndGlyphs">13 Oct 2025</text>
<rect x="583.3" y="616.5" width="1" height="3" fill="#c8c8c8"/>
<text x="582.6" y="626" font-size="8" fill="#fff" textLength="35.8" lengthAdjust="spacingAndGlyphs">3 Nov 2025</text>
<rect x="631.5" y="616.5" width="1" height="3" fill="#c8c8c8"/>
<text x="630.8" y="626" font-size="8" fill="#fff" textLength="39.4" lengthAdjust="spacingAndGlyphs">25 Nov 2025</text>
<rect x="679.7" y="616.5" width="1" height="3" fill="#c8c8c8"/>
<text x="679.0" y="626" font-size="8" fill="#fff" textLength="39.4" lengthAdjust="spacingAndGlyphs">17 Dec 2025</text>
<rect x="727.9" y="616.5" width="1" height="3" fill="#c8c8c8"/>
<text x="727.2" y="626" font-size="8" fill="#fff" textLength="39.4" lengthAdjust="spacingAndGlyphs">12 Jan 2026</text>
<rect x="776.1" y="616.5" width="1" height="3" fill="#c8c8c8"/>
<text x="775.4" y="626" font-size="8" fill="#fff" textLength="35.8" lengthAdjust="spacingAndGlyphs">3 Feb 2026</text>
<rect x="824.3" y="616.5" width="1" height="3" fill="#c8c8c8"/>
<text x="823.6" y="626" font-size="8" fill="#fff" textLength="39.4" lengthAdjust="spacingAndGlyphs">25 Feb 2026</text>
<rect x="872.5" y="616.5" width="1" height="3" fill="#c8c8c8"/>
<text x="871.8" y="626" font-size="8" fill="#fff" textLength="39.4" lengthAdjust="spacingAndGlyphs">17 Mar 2026</text>
<rect x="14" y="100" width="106" height="191" rx="0.8" fill="#808080" stroke="#ff4500" stroke-width="4" stroke-linejoin="round"/>
<text x="24" y="117.5" font-size="11.5" font-weight="500" fill="#f0f0f0" textLength="60" lengthAdjust="spacingAndGlyphs">通貨別強弱</text>
<text x="24" y="133" font-size="11.5" font-weight="500" fill="#f0f0f0" textLength="40.5" lengthAdjust="spacingAndGlyphs">時間:15</text>
<text x="78" y="133" font-size="11.5" font-weight="500" fill="#f0f0f0" textLength="22" lengthAdjust="spacingAndGlyphs">足:3</text>
<text x="24" y="148.6" font-size="12" font-weight="bold" fill="#008000" textLength="37" lengthAdjust="spacingAndGlyphs">1.EUR</text>
<text x="65" y="148.6" font-size="12" font-weight="bold" fill="#008000" textLength="16.5" lengthAdjust="spacingAndGlyphs">6.7</text>
<path d="M95.5,148.8 h11 l-5.5,-9.5 z" fill="#00ff00"/>
<text x="24" y="168.2" font-size="12" font-weight="bold" fill="#008000" textLength="37" lengthAdjust="spacingAndGlyphs">2.NZD</text>
<text x="65" y="168.2" font-size="12" font-weight="bold" fill="#008000" textLength="16.5" lengthAdjust="spacingAndGlyphs">6.7</text>
<path d="M95.5,168.4 h11 l-5.5,-9.5 z" fill="#00ff00"/>
<text x="24" y="187.7" font-size="12" font-weight="bold" fill="#e8a868" textLength="37" lengthAdjust="spacingAndGlyphs">3.GBP</text>
<text x="65" y="187.7" font-size="12" font-weight="bold" fill="#e8a868" textLength="16.5" lengthAdjust="spacingAndGlyphs">5.1</text>
<path d="M95.5,179.4 h11 l-5.5,9.5 z" fill="#ff0000"/>
<text x="24" y="207.3" font-size="12" font-weight="bold" fill="#ffff00" textLength="37" lengthAdjust="spacingAndGlyphs">4.AUD</text>
<text x="65" y="207.3" font-size="12" font-weight="bold" fill="#ffff00" textLength="16.5" lengthAdjust="spacingAndGlyphs">4.7</text>
<path d="M95.5,207.5 h11 l-5.5,-9.5 z" fill="#00ff00"/>
<text x="24" y="226.8" font-size="12" font-weight="bold" fill="#ffff00" textLength="37" lengthAdjust="spacingAndGlyphs">5.JPY</text>
<text x="65" y="226.8" font-size="12" font-weight="bold" fill="#ffff00" textLength="16.5" lengthAdjust="spacingAndGlyphs">3.9</text>
<path d="M95.5,218.5 h11 l-5.5,9.5 z" fill="#ff0000"/>
<text x="24" y="246.4" font-size="12" font-weight="bold" fill="#ffff00" textLength="37" lengthAdjust="spacingAndGlyphs">6.CHF</text>
<text x="65" y="246.4" font-size="12" font-weight="bold" fill="#ffff00" textLength="16.5" lengthAdjust="spacingAndGlyphs">3.3</text>
<path d="M95.5,238.1 h11 l-5.5,9.5 z" fill="#ff0000"/>
<text x="24" y="265.9" font-size="12" font-weight="bold" fill="#ffff00" textLength="37" lengthAdjust="spacingAndGlyphs">7.USD</text>
<text x="65" y="265.9" font-size="12" font-weight="bold" fill="#ffff00" textLength="16.5" lengthAdjust="spacingAndGlyphs">3.1</text>
<path d="M95.5,257.6 h11 l-5.5,9.5 z" fill="#ff0000"/>
<text x="24" y="285.4" font-size="12" font-weight="bold" fill="#ff4500" textLength="37" lengthAdjust="spacingAndGlyphs">8.CAD</text>
<text x="65" y="285.4" font-size="12" font-weight="bold" fill="#ff4500" textLength="16.5" lengthAdjust="spacingAndGlyphs">2.4</text>
<path d="M95.5,277.1 h11 l-5.5,9.5 z" fill="#ff0000"/>
<rect x="0" y="632" width="1024" height="1.4" fill="#dedede"/>
<rect x="0" y="633" width="1024" height="34" fill="#f0f0f0"/>
<rect x="0" y="649.5" width="1024" height="1" fill="#fbfbfb"/>
<path d="M5.5,632 V647.3 H74.5 V632" fill="#fff" stroke="#333" stroke-width="1"/>
<rect x="6" y="632" width="68" height="1.5" fill="#fff"/>
<text x="14.4" y="644.3" font-size="9.3" fill="#2a2a2a" textLength="51" lengthAdjust="spacingAndGlyphs">USDJPY,Daily</text>
<text x="84" y="644.3" font-size="9.3" fill="#888" textLength="54" lengthAdjust="spacingAndGlyphs">EURUSD,Daily</text>
<text x="155" y="644.3" font-size="9.3" fill="#888" textLength="62" lengthAdjust="spacingAndGlyphs">JP225Cash,Daily</text>
<text x="234" y="644.3" font-size="9.3" fill="#888" textLength="61" lengthAdjust="spacingAndGlyphs">US30Cash,Daily</text>
<text x="312" y="644.3" font-size="9.3" fill="#888" textLength="64.5" lengthAdjust="spacingAndGlyphs">US100Cash,Daily</text>
<text x="394" y="644.3" font-size="9.3" fill="#888" textLength="45" lengthAdjust="spacingAndGlyphs">GOLD,Daily</text>
<text x="456.6" y="644.3" font-size="9.3" fill="#888" textLength="67" lengthAdjust="spacingAndGlyphs">OIL-MAY26,Daily</text>
<text x="541.6" y="644.3" font-size="9.3" fill="#888" textLength="46.5" lengthAdjust="spacingAndGlyphs">GBPUSD,H1</text>
<text x="603.8" y="644.3" font-size="9.3" fill="#888" textLength="56" lengthAdjust="spacingAndGlyphs">AUDUSD,Daily</text>
<text x="678" y="644.3" font-size="9.3" fill="#888" textLength="50" lengthAdjust="spacingAndGlyphs">GBPJPY,Daily</text>
<text x="746.5" y="644.3" font-size="9.3" fill="#888" textLength="52" lengthAdjust="spacingAndGlyphs">AUDJPY,Daily</text>
<text x="815.6" y="644.3" font-size="9.3" fill="#888" textLength="42.5" lengthAdjust="spacingAndGlyphs">USDJPY,H1</text>
<text x="876" y="644.3" font-size="9.3" fill="#888" textLength="50.5" lengthAdjust="spacingAndGlyphs">EURJPY,Daily</text>
<text x="946" y="644.3" font-size="9.3" fill="#888" textLength="49" lengthAdjust="spacingAndGlyphs">ETHUSD,Dail</text>
<rect x="146.4" y="636" width="1.2" height="10.6" fill="#aaa"/>
<rect x="225.4" y="636" width="1.2" height="10.6" fill="#aaa"/>
<rect x="303.4" y="636" width="1.2" height="10.6" fill="#aaa"/>
<rect x="384.9" y="636" width="1.2" height="10.6" fill="#aaa"/>
<rect x="448.0" y="636" width="1.2" height="10.6" fill="#aaa"/>
<rect x="532.4" y="636" width="1.2" height="10.6" fill="#aaa"/>
<rect x="595.9" y="636" width="1.2" height="10.6" fill="#aaa"/>
<rect x="668.4" y="636" width="1.2" height="10.6" fill="#aaa"/>
<rect x="737.4" y="636" width="1.2" height="10.6" fill="#aaa"/>
<rect x="807.0" y="636" width="1.2" height="10.6" fill="#aaa"/>
<rect x="866.4" y="636" width="1.2" height="10.6" fill="#aaa"/>
<rect x="935.9" y="636" width="1.2" height="10.6" fill="#aaa"/>
<path d="M1013,638.5 l3,2.5 l-3,2.5 z" fill="#222"/>
<path d="M999,641 l2.6,-2.3 v4.6 z" fill="#888"/>
<text x="3" y="661.6" font-size="9" font-weight="300" fill="#333" textLength="104" lengthAdjust="spacingAndGlyphs">F1キーでヘルプが表示されます</text>
<text x="492.5" y="661.6" font-size="9" font-weight="300" fill="#333" textLength="28.5" lengthAdjust="spacingAndGlyphs">Default</text>
<text x="580" y="661.6" font-size="9" font-weight="300" fill="#333" textLength="63" lengthAdjust="spacingAndGlyphs">2025.05.26 00:00</text>
<text x="657" y="661.6" font-size="9" font-weight="300" fill="#333" textLength="40" lengthAdjust="spacingAndGlyphs">O: 142.410</text>
<text x="709.6" y="661.6" font-size="9" font-weight="300" fill="#333" textLength="41.5" lengthAdjust="spacingAndGlyphs">H: 143.072</text>
<text x="763.7" y="661.6" font-size="9" font-weight="300" fill="#333" textLength="38.5" lengthAdjust="spacingAndGlyphs">L: 142.216</text>
<text x="814.6" y="661.6" font-size="9" font-weight="300" fill="#333" textLength="39.5" lengthAdjust="spacingAndGlyphs">C: 142.825</text>
<text x="866.7" y="661.6" font-size="9" font-weight="300" fill="#333" textLength="37.5" lengthAdjust="spacingAndGlyphs">V: 140166</text>
<text x="937.5" y="661.6" font-size="9" font-weight="300" fill="#333" textLength="38" lengthAdjust="spacingAndGlyphs">1421/5 kb</text>
<rect x="487.3" y="652" width="1" height="14" fill="#c0c0c0"/>
<rect x="575.0" y="652" width="1" height="14" fill="#c0c0c0"/>
<rect x="651.1" y="652" width="1" height="14" fill="#c0c0c0"/>
<rect x="703.5" y="652" width="1" height="14" fill="#c0c0c0"/>
<rect x="757.9" y="652" width="1" height="14" fill="#c0c0c0"/>
<rect x="809.5" y="652" width="1" height="14" fill="#c0c0c0"/>
<rect x="861.9" y="652" width="1" height="14" fill="#c0c0c0"/>
<rect x="911.1" y="652" width="1" height="14" fill="#c0c0c0"/>
<rect x="916.0" y="655.0" width="1.6" height="9" fill="#3aa03a"/>
<rect x="918.3" y="655.0" width="1.6" height="9" fill="#2a60c0"/>
<rect x="920.6" y="655.0" width="1.6" height="9" fill="#3aa03a"/>
<rect x="922.9" y="655.0" width="1.6" height="9" fill="#2a60c0"/>
<rect x="925.2" y="655.0" width="1.6" height="9" fill="#3aa03a"/>
<rect x="927.5" y="655.0" width="1.6" height="9" fill="#2a60c0"/>
<rect x="929.8" y="655.0" width="1.6" height="9" fill="#3aa03a"/>
<rect x="932.1" y="655.0" width="1.6" height="9" fill="#2a60c0"/>
<path d="M1022,658 l-9,9 M1022,661 l-6,6 M1022,664 l-3,3" stroke="#aaa" stroke-width="1"/>
<path d="M0.55,1 V662 Q0.55,666.5 5,666.5" stroke="#4f80ac" stroke-width="1.1" fill="none"/>
<path d="M0,0 H5 Q0.6,0.6 0,5 Z M1024,0 H1019 Q1023.4,0.6 1024,5 Z M0,667 V662 Q0.6,666.4 5,667 Z" fill="#2f6d9c"/>
</svg>
</body></html>
